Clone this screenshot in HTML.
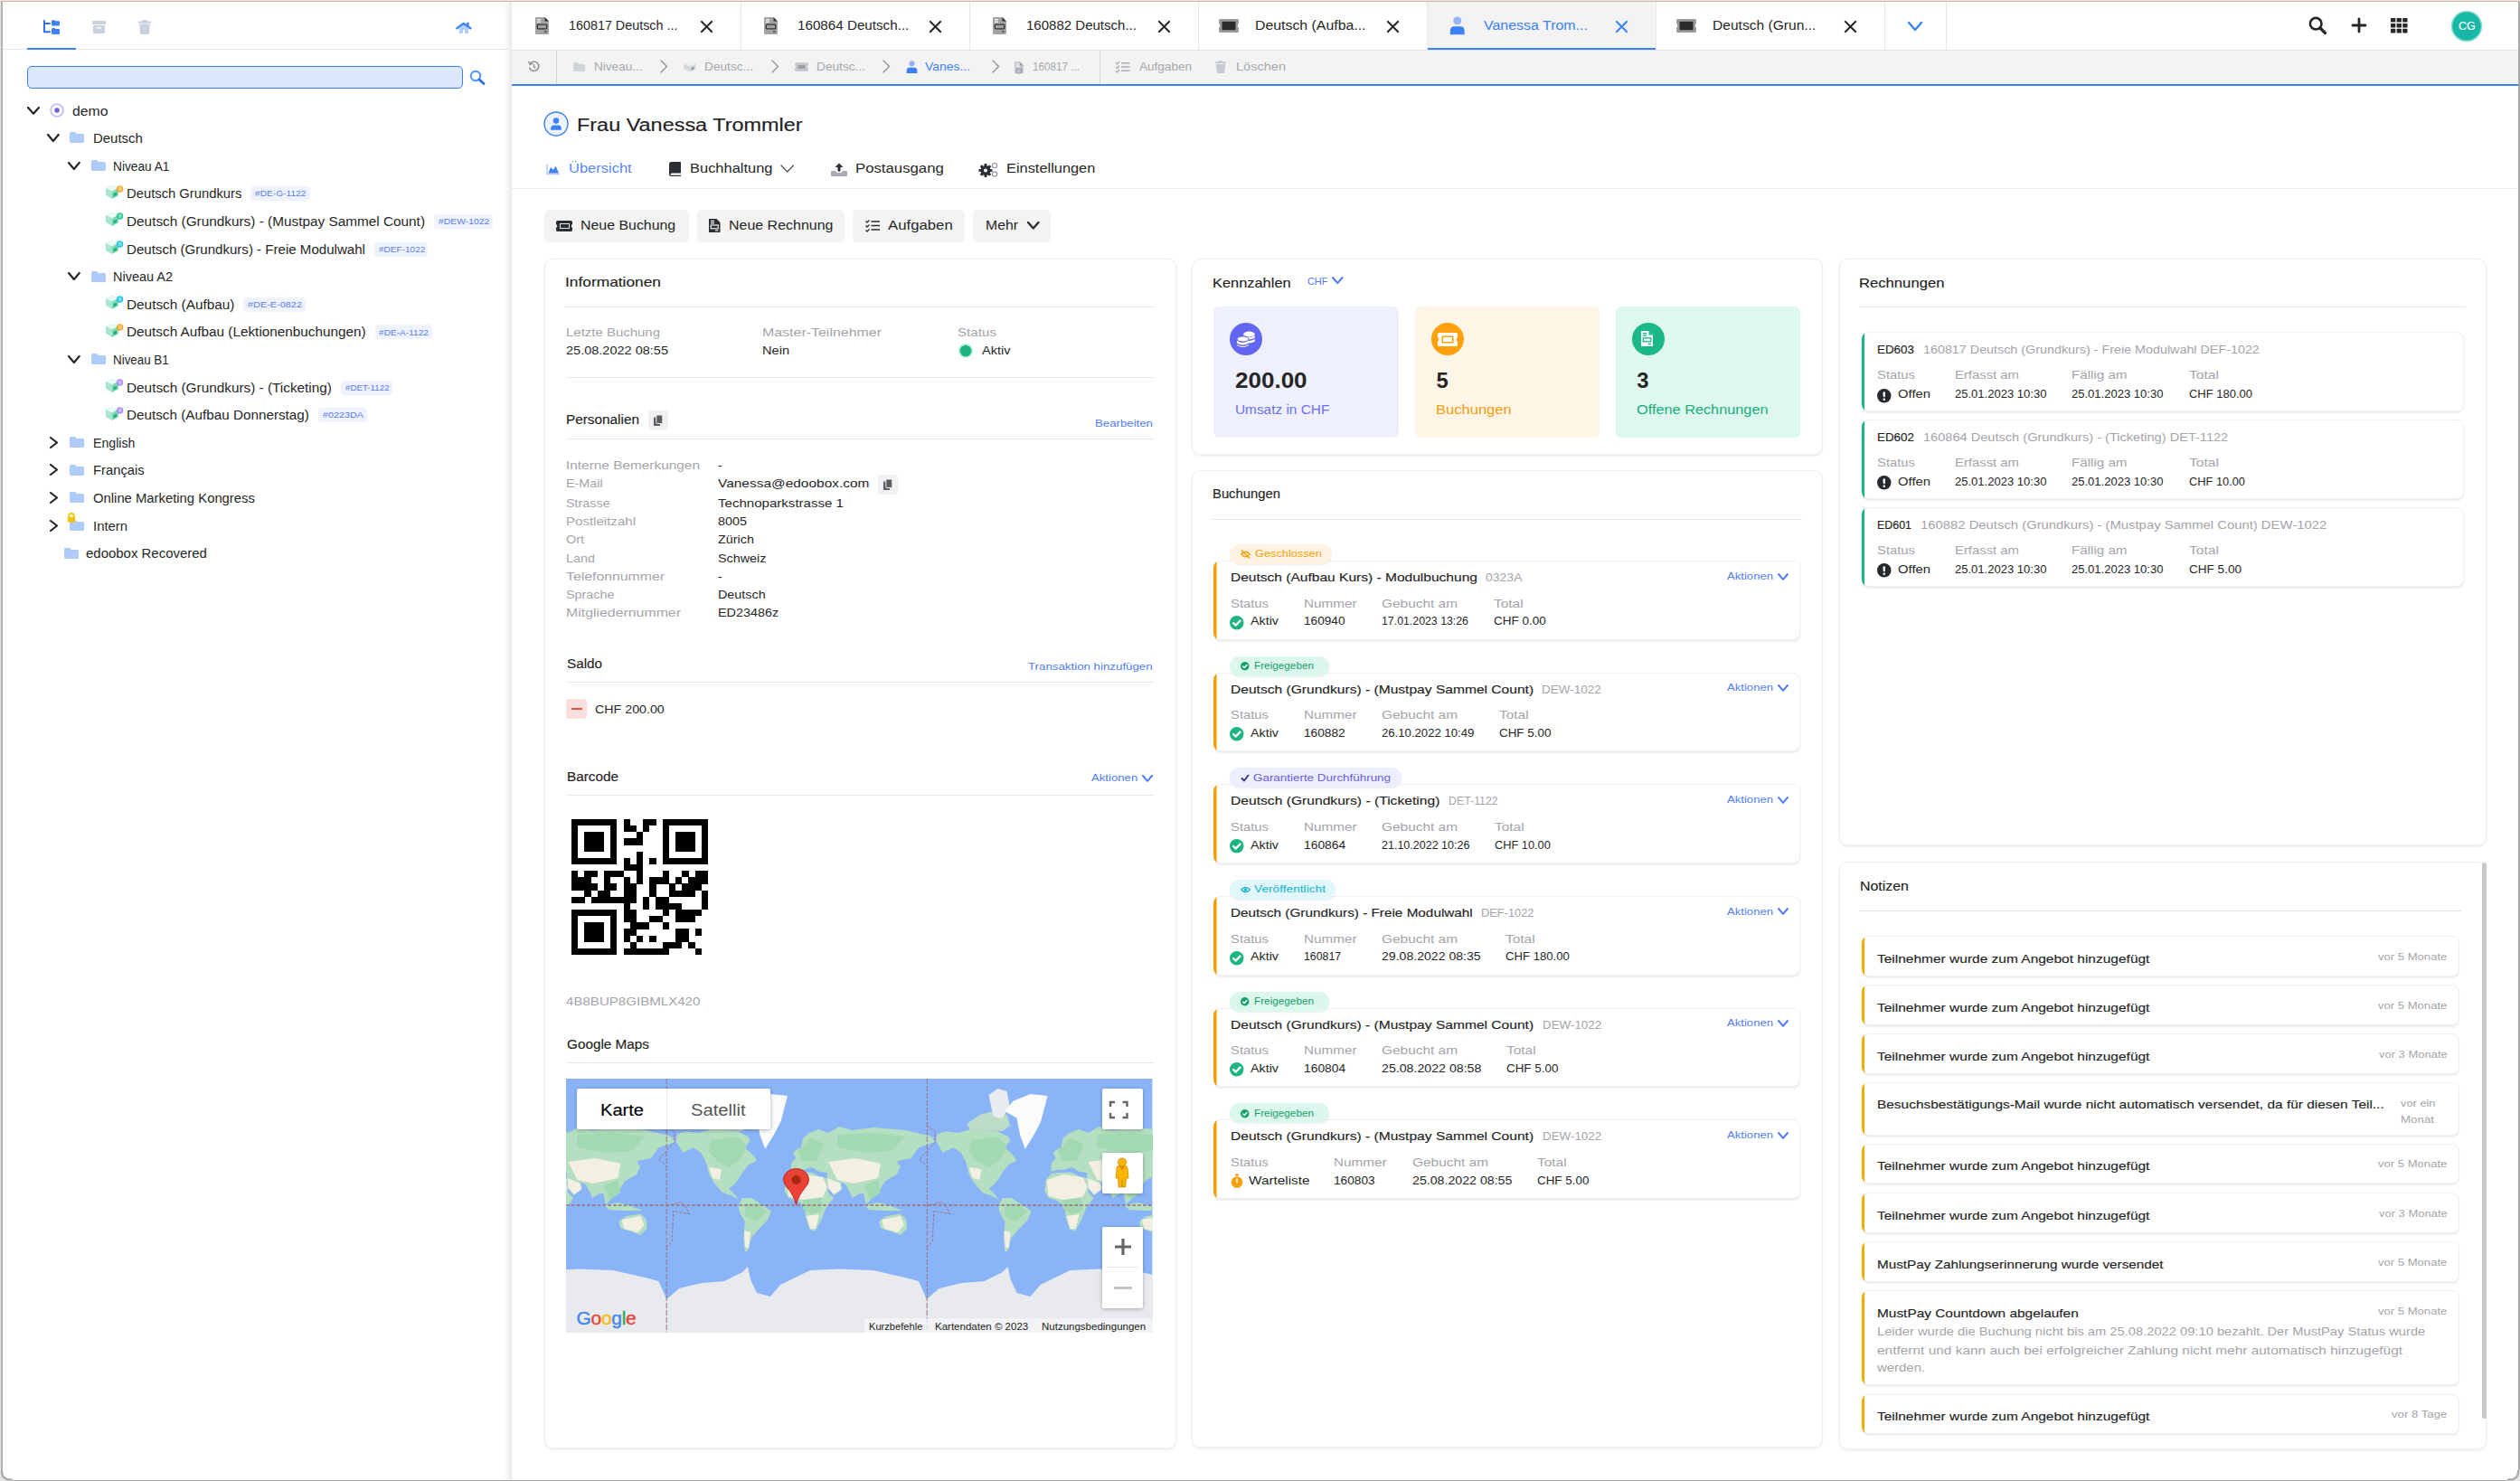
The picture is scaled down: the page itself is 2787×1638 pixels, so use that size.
<!DOCTYPE html>
<html><head><meta charset="utf-8"><style>
html,body{margin:0;padding:0;width:2787px;height:1638px;overflow:hidden;background:#fff}
body{position:relative;font-family:"Liberation Sans",sans-serif}
.t{position:absolute;white-space:pre;line-height:1;font-family:"Liberation Sans",sans-serif}
.b{position:absolute;box-sizing:border-box}
svg.b{overflow:visible}
</style></head><body>
<div class="b" style="left:0;top:0;width:2787px;height:1638px;background:#fff"></div>
<div class="b" style="left:3.00px;top:2.00px;width:563.00px;height:1636.00px;background:#fff"></div>
<div class="b" style="left:556.00px;top:2.00px;width:10.00px;height:1636.00px;background:linear-gradient(to right, rgba(0,0,0,0), rgba(0,0,0,0.035) 60%, rgba(0,0,0,0.09))"></div>
<div class="b" style="left:3.00px;top:54.00px;width:563.00px;height:1.00px;background:#e3e8ee"></div>
<div class="b" style="left:30.00px;top:53.00px;width:54.00px;height:2.00px;background:#3b82f6"></div>
<svg class="b" style="left:47.00px;top:22.00px;" width="20" height="17" viewBox="0 0 20 17"><path d="M2 1 V13.2 H8 M2 4 H8" fill="none" stroke="#2f6fec" stroke-width="2" stroke-linecap="round"/><path d="M10 1.2 Q10 0.2 11.2 0.2 H13.5 L14.5 1.2 H17.8 Q19 1.2 19 2.4 V5.6 Q19 6.6 17.8 6.6 H11.2 Q10 6.6 10 5.6Z" fill="#3d82f3"/><path d="M10 10.2 Q10 9 11.2 9 H13.5 L14.5 10 H17.8 Q19 10 19 11.2 V14.8 Q19 16 17.8 16 H11.2 Q10 16 10 14.8Z" fill="#3d82f3"/></svg>
<svg class="b" style="left:102.00px;top:23.00px;" width="15" height="14" viewBox="0 0 15 14"><rect x="0" y="0" width="15" height="4" rx="0.8" fill="#c9d2dd"/><path d="M1 5 H14 V13 Q14 14 13 14 H2 Q1 14 1 13Z" fill="#c9d2dd"/><rect x="5" y="7" width="5" height="1.6" rx="0.8" fill="#fff"/></svg>
<svg class="b" style="left:153.00px;top:22.00px;" width="14" height="16" viewBox="0 0 14 16"><rect x="0" y="1.5" width="14" height="2.3" rx="0.5" fill="#c9d2dd"/><rect x="4.5" y="0" width="5" height="2" rx="0.5" fill="#c9d2dd"/><path d="M1.2 4.6 H12.8 L12 15 Q11.9 16 10.9 16 H3.1 Q2.1 16 2 15Z" fill="#c9d2dd"/></svg>
<svg class="b" style="left:503.00px;top:23.00px;" width="19" height="15" viewBox="0 0 19 15"><path d="M5 8.6 L10 4.6 L15 8.6 V14 H11.1 V10.8 Q11.1 9.5 10 9.5 Q8.9 9.5 8.9 10.8 V14 H5Z" fill="#b1cdfa"/><path d="M2.4 8.2 L9.8 2.9 L17.3 8.2" fill="none" stroke="#3b82f6" stroke-width="2.4" stroke-linecap="round" stroke-linejoin="round"/><rect x="13.2" y="1.8" width="2.5" height="3.8" fill="#3b82f6"/></svg>
<div class="b" style="left:30.00px;top:73.00px;width:482.00px;height:25.00px;background:#dbe7fd;border:1.5px solid #3b82f6;border-radius:5px;box-sizing:border-box"></div>
<svg class="b" style="left:519.00px;top:77.00px;" width="18" height="17" viewBox="0 0 18 17"><circle cx="7" cy="7" r="5.2" fill="none" stroke="#5b9cf7" stroke-width="2.2"/><path d="M11 11 L16 15.5" stroke="#2f6fec" stroke-width="3" stroke-linecap="round"/></svg>
<svg class="b" style="left:29.00px;top:116.65px;" width="16" height="10.7" viewBox="0 0 16 10.7"><path d="M2 2 L8.0 8.7 L14 2" fill="none" stroke="#262626" stroke-width="2.2" stroke-linecap="round" stroke-linejoin="round"/></svg>
<svg class="b" style="left:55.00px;top:114.00px;" width="16" height="16" viewBox="0 0 16 16"><circle cx="8" cy="8" r="6.9" fill="none" stroke="#c8bdfb" stroke-width="1.8"/><circle cx="8" cy="8" r="2.7" fill="#6c5ce7"/></svg>
<div class="t" style="left:79.80px;top:115.55px;font-size:14px;color:#262626;letter-spacing:0.000px;transform:scaleX(1.1279);transform-origin:0 0;">demo</div>
<svg class="b" style="left:51.15px;top:146.50px;" width="15.7" height="11" viewBox="0 0 15.7 11"><path d="M2 2 L7.85 9 L13.7 2" fill="none" stroke="#262626" stroke-width="2.2" stroke-linecap="round" stroke-linejoin="round"/></svg>
<svg class="b" style="left:77.00px;top:146.00px;" width="16" height="12" viewBox="0 0 16 12"><path d="M1.5 0 H6.08 L8.0 2.04 H14.5 Q16 2.04 16 3.5999999999999996 V10.5 Q16 12 14.5 12 H1.5 Q0 12 0 10.5 V1.5 Q0 0 1.5 0 Z" fill="#aecbfa"/></svg>
<div class="t" style="left:102.50px;top:145.55px;font-size:14px;color:#262626;letter-spacing:0.000px;transform:scaleX(1.0670);transform-origin:0 0;">Deutsch</div>
<svg class="b" style="left:74.15px;top:177.50px;" width="15.7" height="11" viewBox="0 0 15.7 11"><path d="M2 2 L7.85 9 L13.7 2" fill="none" stroke="#262626" stroke-width="2.2" stroke-linecap="round" stroke-linejoin="round"/></svg>
<svg class="b" style="left:100.50px;top:177.00px;" width="16" height="12" viewBox="0 0 16 12"><path d="M1.5 0 H6.08 L8.0 2.04 H14.5 Q16 2.04 16 3.5999999999999996 V10.5 Q16 12 14.5 12 H1.5 Q0 12 0 10.5 V1.5 Q0 0 1.5 0 Z" fill="#aecbfa"/></svg>
<div class="t" style="left:125.00px;top:176.55px;font-size:14px;color:#262626;letter-spacing:0.000px;transform:scaleX(0.9793);transform-origin:0 0;">Niveau A1</div>
<svg class="b" style="left:116.00px;top:202.50px;" width="22" height="20" viewBox="0 0 22 20"><path d="M8 2 L15 5 L15 13 L8 17 L1 13 L1 5 Z" fill="#a7e6cf"/><path d="M8 2 L15 5 L8 8.5 L1 5 Z" fill="#e9faf3"/><path d="M8 8.5 L15 5 L15 13 L8 17 Z" fill="#7fd9b6"/><path d="M9.5 11 L13 9.5 L13 13 L9.5 14.5 Z" fill="#1fae7a"/><circle cx="16.5" cy="6" r="3.1" fill="#f4a62a" fill-opacity="0.6" stroke="#f4a62a" stroke-width="1.3"/></svg>
<div class="t" style="left:140.30px;top:207.05px;font-size:14px;color:#262626;letter-spacing:0.000px;transform:scaleX(1.0563);transform-origin:0 0;">Deutsch Grundkurs</div>
<div class="b" style="left:277.30px;top:206.10px;width:66.10px;height:16.00px;background:#eef3fe;border-radius:4px"></div>
<div class="t" style="left:282.00px;top:209.37px;font-size:9.6px;color:#5b7cf0;letter-spacing:0.000px;transform:scaleX(1.0605);transform-origin:0 0;">#DE-G-1122</div>
<svg class="b" style="left:116.00px;top:233.30px;" width="22" height="20" viewBox="0 0 22 20"><path d="M8 2 L15 5 L15 13 L8 17 L1 13 L1 5 Z" fill="#a7e6cf"/><path d="M8 2 L15 5 L8 8.5 L1 5 Z" fill="#e9faf3"/><path d="M8 8.5 L15 5 L15 13 L8 17 Z" fill="#7fd9b6"/><path d="M9.5 11 L13 9.5 L13 13 L9.5 14.5 Z" fill="#1fae7a"/><circle cx="16.5" cy="6" r="3.1" fill="#22c98e" fill-opacity="0.6" stroke="#22c98e" stroke-width="1.3"/></svg>
<div class="t" style="left:140.30px;top:237.85px;font-size:14px;color:#262626;letter-spacing:0.000px;transform:scaleX(1.0960);transform-origin:0 0;">Deutsch (Grundkurs) - (Mustpay Sammel Count)</div>
<div class="b" style="left:479.90px;top:236.90px;width:65.00px;height:16.00px;background:#eef3fe;border-radius:4px"></div>
<div class="t" style="left:484.60px;top:240.17px;font-size:9.6px;color:#5b7cf0;letter-spacing:0.000px;transform:scaleX(1.0822);transform-origin:0 0;">#DEW-1022</div>
<svg class="b" style="left:116.00px;top:264.00px;" width="22" height="20" viewBox="0 0 22 20"><path d="M8 2 L15 5 L15 13 L8 17 L1 13 L1 5 Z" fill="#a7e6cf"/><path d="M8 2 L15 5 L8 8.5 L1 5 Z" fill="#e9faf3"/><path d="M8 8.5 L15 5 L15 13 L8 17 Z" fill="#7fd9b6"/><path d="M9.5 11 L13 9.5 L13 13 L9.5 14.5 Z" fill="#1fae7a"/><circle cx="16.5" cy="6" r="3.1" fill="#22c3e6" fill-opacity="0.6" stroke="#22c3e6" stroke-width="1.3"/></svg>
<div class="t" style="left:140.30px;top:268.55px;font-size:14px;color:#262626;letter-spacing:0.000px;transform:scaleX(1.0767);transform-origin:0 0;">Deutsch (Grundkurs) - Freie Modulwahl</div>
<div class="b" style="left:413.80px;top:267.60px;width:59.70px;height:16.00px;background:#eef3fe;border-radius:4px"></div>
<div class="t" style="left:418.50px;top:270.87px;font-size:9.6px;color:#5b7cf0;letter-spacing:0.000px;transform:scaleX(1.0470);transform-origin:0 0;">#DEF-1022</div>
<svg class="b" style="left:74.15px;top:300.00px;" width="15.7" height="11" viewBox="0 0 15.7 11"><path d="M2 2 L7.85 9 L13.7 2" fill="none" stroke="#262626" stroke-width="2.2" stroke-linecap="round" stroke-linejoin="round"/></svg>
<svg class="b" style="left:100.50px;top:299.50px;" width="16" height="12" viewBox="0 0 16 12"><path d="M1.5 0 H6.08 L8.0 2.04 H14.5 Q16 2.04 16 3.5999999999999996 V10.5 Q16 12 14.5 12 H1.5 Q0 12 0 10.5 V1.5 Q0 0 1.5 0 Z" fill="#aecbfa"/></svg>
<div class="t" style="left:125.00px;top:299.05px;font-size:14px;color:#262626;letter-spacing:0.000px;transform:scaleX(1.0357);transform-origin:0 0;">Niveau A2</div>
<svg class="b" style="left:116.00px;top:325.20px;" width="22" height="20" viewBox="0 0 22 20"><path d="M8 2 L15 5 L15 13 L8 17 L1 13 L1 5 Z" fill="#a7e6cf"/><path d="M8 2 L15 5 L8 8.5 L1 5 Z" fill="#e9faf3"/><path d="M8 8.5 L15 5 L15 13 L8 17 Z" fill="#7fd9b6"/><path d="M9.5 11 L13 9.5 L13 13 L9.5 14.5 Z" fill="#1fae7a"/><circle cx="16.5" cy="6" r="3.1" fill="#22c3e6" fill-opacity="0.6" stroke="#22c3e6" stroke-width="1.3"/></svg>
<div class="t" style="left:140.30px;top:329.75px;font-size:14px;color:#262626;letter-spacing:0.000px;transform:scaleX(1.0959);transform-origin:0 0;">Deutsch (Aufbau)</div>
<div class="b" style="left:269.30px;top:328.80px;width:68.90px;height:16.00px;background:#eef3fe;border-radius:4px"></div>
<div class="t" style="left:274.00px;top:332.07px;font-size:9.6px;color:#5b7cf0;letter-spacing:0.000px;transform:scaleX(1.1357);transform-origin:0 0;">#DE-E-0822</div>
<svg class="b" style="left:116.00px;top:355.80px;" width="22" height="20" viewBox="0 0 22 20"><path d="M8 2 L15 5 L15 13 L8 17 L1 13 L1 5 Z" fill="#a7e6cf"/><path d="M8 2 L15 5 L8 8.5 L1 5 Z" fill="#e9faf3"/><path d="M8 8.5 L15 5 L15 13 L8 17 Z" fill="#7fd9b6"/><path d="M9.5 11 L13 9.5 L13 13 L9.5 14.5 Z" fill="#1fae7a"/><circle cx="16.5" cy="6" r="3.1" fill="#f4a62a" fill-opacity="0.6" stroke="#f4a62a" stroke-width="1.3"/></svg>
<div class="t" style="left:140.30px;top:360.35px;font-size:14px;color:#262626;letter-spacing:0.000px;transform:scaleX(1.0935);transform-origin:0 0;">Deutsch Aufbau (Lektionenbuchungen)</div>
<div class="b" style="left:414.60px;top:359.40px;width:63.90px;height:16.00px;background:#eef3fe;border-radius:4px"></div>
<div class="t" style="left:419.30px;top:362.67px;font-size:9.6px;color:#5b7cf0;letter-spacing:0.000px;transform:scaleX(1.0553);transform-origin:0 0;">#DE-A-1122</div>
<svg class="b" style="left:74.15px;top:391.80px;" width="15.7" height="11" viewBox="0 0 15.7 11"><path d="M2 2 L7.85 9 L13.7 2" fill="none" stroke="#262626" stroke-width="2.2" stroke-linecap="round" stroke-linejoin="round"/></svg>
<svg class="b" style="left:100.50px;top:391.30px;" width="16" height="12" viewBox="0 0 16 12"><path d="M1.5 0 H6.08 L8.0 2.04 H14.5 Q16 2.04 16 3.5999999999999996 V10.5 Q16 12 14.5 12 H1.5 Q0 12 0 10.5 V1.5 Q0 0 1.5 0 Z" fill="#aecbfa"/></svg>
<div class="t" style="left:125.00px;top:390.85px;font-size:14px;color:#262626;letter-spacing:0.000px;transform:scaleX(0.9552);transform-origin:0 0;">Niveau B1</div>
<svg class="b" style="left:116.00px;top:417.20px;" width="22" height="20" viewBox="0 0 22 20"><path d="M8 2 L15 5 L15 13 L8 17 L1 13 L1 5 Z" fill="#a7e6cf"/><path d="M8 2 L15 5 L8 8.5 L1 5 Z" fill="#e9faf3"/><path d="M8 8.5 L15 5 L15 13 L8 17 Z" fill="#7fd9b6"/><path d="M9.5 11 L13 9.5 L13 13 L9.5 14.5 Z" fill="#1fae7a"/><circle cx="16.5" cy="6" r="3.1" fill="#a78bfa" fill-opacity="0.6" stroke="#a78bfa" stroke-width="1.3"/></svg>
<div class="t" style="left:140.30px;top:421.75px;font-size:14px;color:#262626;letter-spacing:0.000px;transform:scaleX(1.0951);transform-origin:0 0;">Deutsch (Grundkurs) - (Ticketing)</div>
<div class="b" style="left:376.80px;top:420.80px;width:57.70px;height:16.00px;background:#eef3fe;border-radius:4px"></div>
<div class="t" style="left:381.50px;top:424.07px;font-size:9.6px;color:#5b7cf0;letter-spacing:0.000px;transform:scaleX(1.0156);transform-origin:0 0;">#DET-1122</div>
<svg class="b" style="left:116.00px;top:447.60px;" width="22" height="20" viewBox="0 0 22 20"><path d="M8 2 L15 5 L15 13 L8 17 L1 13 L1 5 Z" fill="#a7e6cf"/><path d="M8 2 L15 5 L8 8.5 L1 5 Z" fill="#e9faf3"/><path d="M8 8.5 L15 5 L15 13 L8 17 Z" fill="#7fd9b6"/><path d="M9.5 11 L13 9.5 L13 13 L9.5 14.5 Z" fill="#1fae7a"/><circle cx="16.5" cy="6" r="3.1" fill="#a78bfa" fill-opacity="0.6" stroke="#a78bfa" stroke-width="1.3"/></svg>
<div class="t" style="left:140.30px;top:452.15px;font-size:14px;color:#262626;letter-spacing:0.000px;transform:scaleX(1.0901);transform-origin:0 0;">Deutsch (Aufbau Donnerstag)</div>
<div class="b" style="left:351.80px;top:451.20px;width:54.50px;height:16.00px;background:#eef3fe;border-radius:4px"></div>
<div class="t" style="left:356.50px;top:454.47px;font-size:9.6px;color:#5b7cf0;letter-spacing:0.000px;transform:scaleX(1.1241);transform-origin:0 0;">#0223DA</div>
<svg class="b" style="left:53.50px;top:481.90px;" width="11" height="15" viewBox="0 0 11 15"><path d="M2 2 L9 7.5 L2 13" fill="none" stroke="#262626" stroke-width="2.2" stroke-linecap="round" stroke-linejoin="round"/></svg>
<svg class="b" style="left:77.00px;top:483.20px;" width="16" height="12" viewBox="0 0 16 12"><path d="M1.5 0 H6.08 L8.0 2.04 H14.5 Q16 2.04 16 3.5999999999999996 V10.5 Q16 12 14.5 12 H1.5 Q0 12 0 10.5 V1.5 Q0 0 1.5 0 Z" fill="#aecbfa"/></svg>
<div class="t" style="left:102.50px;top:482.75px;font-size:14px;color:#262626;letter-spacing:0.000px;transform:scaleX(1.0105);transform-origin:0 0;">English</div>
<svg class="b" style="left:53.50px;top:512.30px;" width="11" height="15" viewBox="0 0 11 15"><path d="M2 2 L9 7.5 L2 13" fill="none" stroke="#262626" stroke-width="2.2" stroke-linecap="round" stroke-linejoin="round"/></svg>
<svg class="b" style="left:77.00px;top:513.60px;" width="16" height="12" viewBox="0 0 16 12"><path d="M1.5 0 H6.08 L8.0 2.04 H14.5 Q16 2.04 16 3.5999999999999996 V10.5 Q16 12 14.5 12 H1.5 Q0 12 0 10.5 V1.5 Q0 0 1.5 0 Z" fill="#aecbfa"/></svg>
<div class="t" style="left:102.50px;top:513.15px;font-size:14px;color:#262626;letter-spacing:0.000px;transform:scaleX(1.0562);transform-origin:0 0;">Français</div>
<svg class="b" style="left:53.50px;top:543.00px;" width="11" height="15" viewBox="0 0 11 15"><path d="M2 2 L9 7.5 L2 13" fill="none" stroke="#262626" stroke-width="2.2" stroke-linecap="round" stroke-linejoin="round"/></svg>
<svg class="b" style="left:77.00px;top:544.30px;" width="16" height="12" viewBox="0 0 16 12"><path d="M1.5 0 H6.08 L8.0 2.04 H14.5 Q16 2.04 16 3.5999999999999996 V10.5 Q16 12 14.5 12 H1.5 Q0 12 0 10.5 V1.5 Q0 0 1.5 0 Z" fill="#aecbfa"/></svg>
<div class="t" style="left:102.50px;top:543.85px;font-size:14px;color:#262626;letter-spacing:0.000px;transform:scaleX(1.0594);transform-origin:0 0;">Online Marketing Kongress</div>
<svg class="b" style="left:53.50px;top:573.90px;" width="11" height="15" viewBox="0 0 11 15"><path d="M2 2 L9 7.5 L2 13" fill="none" stroke="#262626" stroke-width="2.2" stroke-linecap="round" stroke-linejoin="round"/></svg>
<svg class="b" style="left:77.00px;top:575.20px;" width="16" height="12" viewBox="0 0 16 12"><path d="M1.5 0 H6.08 L8.0 2.04 H14.5 Q16 2.04 16 3.5999999999999996 V10.5 Q16 12 14.5 12 H1.5 Q0 12 0 10.5 V1.5 Q0 0 1.5 0 Z" fill="#aecbfa"/></svg>
<svg class="b" style="left:74.00px;top:567.20px;" width="10" height="11" viewBox="0 0 10 11"><path d="M2.2 5 V3.6 Q2.2 0.8 5 0.8 Q7.8 0.8 7.8 3.6 V5" fill="none" stroke="#f5c400" stroke-width="1.8"/><rect x="0.8" y="4.8" width="8.4" height="5.8" rx="1" fill="#f5c400"/></svg>
<div class="t" style="left:102.50px;top:574.75px;font-size:14px;color:#262626;letter-spacing:0.000px;transform:scaleX(1.0642);transform-origin:0 0;">Intern</div>
<svg class="b" style="left:71.00px;top:605.50px;" width="16" height="12" viewBox="0 0 16 12"><path d="M1.5 0 H6.08 L8.0 2.04 H14.5 Q16 2.04 16 3.5999999999999996 V10.5 Q16 12 14.5 12 H1.5 Q0 12 0 10.5 V1.5 Q0 0 1.5 0 Z" fill="#aecbfa"/></svg>
<div class="t" style="left:95.30px;top:605.05px;font-size:14px;color:#262626;letter-spacing:0.000px;transform:scaleX(1.0685);transform-origin:0 0;">edoobox Recovered</div>
<div class="b" style="left:566.00px;top:2.00px;width:2219.00px;height:53.00px;background:#fff"></div>
<div class="b" style="left:566.00px;top:55.00px;width:2219.00px;height:1.00px;background:#dde3ea"></div>
<div class="b" style="left:819.00px;top:2.00px;width:1.00px;height:53.00px;background:#e5e7eb"></div>
<svg class="b" style="left:592.00px;top:19.00px;" width="15" height="19" viewBox="0 0 15 19"><path d="M1 0 H10.5 L15 4.5 V18 Q15 19 14 19 H1 Q0 19 0 18 V1 Q0 0 1 0Z" fill="#a3a3a3"/><path d="M10.5 0 L15 4.5 H10.5Z" fill="#333"/><rect x="2" y="2" width="4" height="1.6" fill="#e6e6e6"/><rect x="2" y="4.6" width="4" height="1.2" fill="#fff"/><rect x="2.3" y="8.2" width="10.4" height="4.6" rx="0.8" fill="none" stroke="#333" stroke-width="1.3"/><rect x="10" y="15.5" width="2.8" height="1.1" fill="#333"/></svg>
<div class="t" style="left:628.60px;top:19.56px;font-size:15.4px;color:#262626;letter-spacing:0.000px;transform:scaleX(0.9321);transform-origin:0 0;">160817 Deutsch ...</div>
<svg class="b" style="left:775.00px;top:22.50px;" width="13" height="13" viewBox="0 0 13 13"><path d="M1 1 L12 12 M12 1 L1 12" stroke="#262626" stroke-width="2" stroke-linecap="square"/></svg>
<div class="b" style="left:1072.00px;top:2.00px;width:1.00px;height:53.00px;background:#e5e7eb"></div>
<svg class="b" style="left:845.00px;top:19.00px;" width="15" height="19" viewBox="0 0 15 19"><path d="M1 0 H10.5 L15 4.5 V18 Q15 19 14 19 H1 Q0 19 0 18 V1 Q0 0 1 0Z" fill="#a3a3a3"/><path d="M10.5 0 L15 4.5 H10.5Z" fill="#333"/><rect x="2" y="2" width="4" height="1.6" fill="#e6e6e6"/><rect x="2" y="4.6" width="4" height="1.2" fill="#fff"/><rect x="2.3" y="8.2" width="10.4" height="4.6" rx="0.8" fill="none" stroke="#333" stroke-width="1.3"/><rect x="10" y="15.5" width="2.8" height="1.1" fill="#333"/></svg>
<div class="t" style="left:881.60px;top:19.56px;font-size:15.4px;color:#262626;letter-spacing:0.000px;transform:scaleX(0.9872);transform-origin:0 0;">160864 Deutsch...</div>
<svg class="b" style="left:1028.00px;top:22.50px;" width="13" height="13" viewBox="0 0 13 13"><path d="M1 1 L12 12 M12 1 L1 12" stroke="#262626" stroke-width="2" stroke-linecap="square"/></svg>
<div class="b" style="left:1325.00px;top:2.00px;width:1.00px;height:53.00px;background:#e5e7eb"></div>
<svg class="b" style="left:1098.00px;top:19.00px;" width="15" height="19" viewBox="0 0 15 19"><path d="M1 0 H10.5 L15 4.5 V18 Q15 19 14 19 H1 Q0 19 0 18 V1 Q0 0 1 0Z" fill="#a3a3a3"/><path d="M10.5 0 L15 4.5 H10.5Z" fill="#333"/><rect x="2" y="2" width="4" height="1.6" fill="#e6e6e6"/><rect x="2" y="4.6" width="4" height="1.2" fill="#fff"/><rect x="2.3" y="8.2" width="10.4" height="4.6" rx="0.8" fill="none" stroke="#333" stroke-width="1.3"/><rect x="10" y="15.5" width="2.8" height="1.1" fill="#333"/></svg>
<div class="t" style="left:1134.60px;top:19.56px;font-size:15.4px;color:#262626;letter-spacing:0.000px;transform:scaleX(0.9760);transform-origin:0 0;">160882 Deutsch...</div>
<svg class="b" style="left:1281.00px;top:22.50px;" width="13" height="13" viewBox="0 0 13 13"><path d="M1 1 L12 12 M12 1 L1 12" stroke="#262626" stroke-width="2" stroke-linecap="square"/></svg>
<div class="b" style="left:1578.00px;top:2.00px;width:1.00px;height:53.00px;background:#e5e7eb"></div>
<svg class="b" style="left:1348.00px;top:21.00px;" width="22" height="15" viewBox="0 0 22 15"><path d="M1.5 0 H20.5 Q22 0 22 1.5 V4.95 Q19.5 7.5 22 10.05 V13.5 Q22 15 20.5 15 H1.5 Q0 15 0 13.5 V10.05 Q2.5 7.5 0 4.95 V1.5 Q0 0 1.5 0Z" fill="#9a9a9a"/><rect x="3.5" y="2.8" width="15" height="9.4" fill="#2b2b2b"/></svg>
<div class="t" style="left:1387.60px;top:19.56px;font-size:15.4px;color:#262626;letter-spacing:0.000px;transform:scaleX(1.0304);transform-origin:0 0;">Deutsch (Aufba...</div>
<svg class="b" style="left:1534.00px;top:22.50px;" width="13" height="13" viewBox="0 0 13 13"><path d="M1 1 L12 12 M12 1 L1 12" stroke="#262626" stroke-width="2" stroke-linecap="square"/></svg>
<div class="b" style="left:1579.00px;top:2.00px;width:252.00px;height:53.00px;background:#f3f3f3"></div>
<div class="b" style="left:1579.00px;top:53.00px;width:252.00px;height:2.00px;background:#3b82f6"></div>
<div class="b" style="left:1831.00px;top:2.00px;width:1.00px;height:53.00px;background:#e5e7eb"></div>
<svg class="b" style="left:1602.80px;top:17.70px;" width="17.5" height="20.3" viewBox="0 0 17.5 20.3"><circle cx="8.75" cy="4.872" r="4.466" fill="#93b4f7"/><path d="M0.875 20.3 V16.240000000000002 Q0.875 11.368000000000002 5.25 11.368000000000002 H12.25 Q16.625 11.368000000000002 16.625 16.240000000000002 V20.3 Z" fill="#3b82f6"/></svg>
<div class="t" style="left:1640.60px;top:19.56px;font-size:15.4px;color:#3b82f6;letter-spacing:0.000px;transform:scaleX(1.0362);transform-origin:0 0;">Vanessa Trom...</div>
<svg class="b" style="left:1787.00px;top:22.50px;" width="13" height="13" viewBox="0 0 13 13"><path d="M1 1 L12 12 M12 1 L1 12" stroke="#3b82f6" stroke-width="2" stroke-linecap="square"/></svg>
<div class="b" style="left:2084.00px;top:2.00px;width:1.00px;height:53.00px;background:#e5e7eb"></div>
<svg class="b" style="left:1854.00px;top:21.00px;" width="22" height="15" viewBox="0 0 22 15"><path d="M1.5 0 H20.5 Q22 0 22 1.5 V4.95 Q19.5 7.5 22 10.05 V13.5 Q22 15 20.5 15 H1.5 Q0 15 0 13.5 V10.05 Q2.5 7.5 0 4.95 V1.5 Q0 0 1.5 0Z" fill="#9a9a9a"/><rect x="3.5" y="2.8" width="15" height="9.4" fill="#2b2b2b"/></svg>
<div class="t" style="left:1893.60px;top:19.56px;font-size:15.4px;color:#262626;letter-spacing:0.000px;transform:scaleX(1.0126);transform-origin:0 0;">Deutsch (Grun...</div>
<svg class="b" style="left:2040.00px;top:22.50px;" width="13" height="13" viewBox="0 0 13 13"><path d="M1 1 L12 12 M12 1 L1 12" stroke="#262626" stroke-width="2" stroke-linecap="square"/></svg>
<div class="b" style="left:2152.00px;top:2.00px;width:1.00px;height:53.00px;background:#e5e7eb"></div>
<svg class="b" style="left:2109.00px;top:22.50px;" width="18" height="12" viewBox="0 0 18 12"><path d="M2 2 L9.0 10 L16 2" fill="none" stroke="#3b82f6" stroke-width="2.4" stroke-linecap="round" stroke-linejoin="round"/></svg>
<svg class="b" style="left:2553.00px;top:18.00px;" width="21" height="20" viewBox="0 0 21 20"><circle cx="8.2" cy="8.2" r="6.3" fill="none" stroke="#262626" stroke-width="2.6"/><path d="M13 13 L18.5 18.5" stroke="#262626" stroke-width="3.2" stroke-linecap="round"/></svg>
<svg class="b" style="left:2601.00px;top:20.00px;" width="16" height="16" viewBox="0 0 16 16"><path d="M8 1 V15 M1 8 H15" stroke="#262626" stroke-width="2.8" stroke-linecap="round"/></svg>
<svg class="b" style="left:2644.00px;top:20.00px;" width="19" height="17" viewBox="0 0 19 17"><rect x="0.0" y="0.0" width="5.3" height="4.6" rx="0.6" fill="#262626"/><rect x="6.6" y="0.0" width="5.3" height="4.6" rx="0.6" fill="#262626"/><rect x="13.2" y="0.0" width="5.3" height="4.6" rx="0.6" fill="#262626"/><rect x="0.0" y="5.9" width="5.3" height="4.6" rx="0.6" fill="#262626"/><rect x="6.6" y="5.9" width="5.3" height="4.6" rx="0.6" fill="#262626"/><rect x="13.2" y="5.9" width="5.3" height="4.6" rx="0.6" fill="#262626"/><rect x="0.0" y="11.8" width="5.3" height="4.6" rx="0.6" fill="#262626"/><rect x="6.6" y="11.8" width="5.3" height="4.6" rx="0.6" fill="#262626"/><rect x="13.2" y="11.8" width="5.3" height="4.6" rx="0.6" fill="#262626"/></svg>
<svg class="b" style="left:2710.00px;top:11.00px;" width="36" height="36" viewBox="0 0 36 36"><circle cx="18" cy="18" r="16.5" fill="#17b8a6" stroke="#8fded2" stroke-width="1.6"/></svg>
<div class="t" style="left:2718.70px;top:22.77px;font-size:12.2px;color:#ffffff;letter-spacing:0.000px;transform:scaleX(1.0219);transform-origin:0 0;-webkit-text-stroke:0.15px #ffffff;">CG</div>
<div class="b" style="left:566.00px;top:56.00px;width:2219.00px;height:37.00px;background:#f3f3f3"></div>
<div class="b" style="left:566.00px;top:93.00px;width:2219.00px;height:2.00px;background:#3b82f6"></div>
<div class="b" style="left:615.00px;top:56.00px;width:1.00px;height:37.00px;background:#d4d4d4"></div>
<div class="b" style="left:1216.00px;top:56.00px;width:1.00px;height:37.00px;background:#d9d9d9"></div>
<svg class="b" style="left:584.00px;top:67.00px;" width="13" height="13" viewBox="0 0 13 13"><path d="M2.2 3.5 A5.2 5.2 0 1 1 1.5 7.5" fill="none" stroke="#8a8a8a" stroke-width="1.4"/><path d="M0.5 1 L2.2 4.5 L5.5 3" fill="none" stroke="#8a8a8a" stroke-width="1.3"/><path d="M6.5 4 V7 L8.5 8.5" fill="none" stroke="#8a8a8a" stroke-width="1.3"/></svg>
<svg class="b" style="left:634.00px;top:68.50px;" width="13" height="10" viewBox="0 0 13 10"><path d="M1.5 0 H4.94 L6.5 1.7000000000000002 H11.5 Q13 1.7000000000000002 13 3.0 V8.5 Q13 10 11.5 10 H1.5 Q0 10 0 8.5 V1.5 Q0 0 1.5 0 Z" fill="#cfd4da"/></svg>
<div class="t" style="left:656.70px;top:67.20px;font-size:13px;color:#a3a8ae;letter-spacing:0.000px;transform:scaleX(1.0448);transform-origin:0 0;">Niveau...</div>
<svg class="b" style="left:729.25px;top:65.20px;" width="10.5" height="17" viewBox="0 0 10.5 17"><path d="M2 2 L8.5 8.5 L2 15" fill="none" stroke="#8c8c8c" stroke-width="1.2" stroke-linecap="round" stroke-linejoin="round"/></svg>
<svg class="b" style="left:756.00px;top:67.00px;" width="14" height="13" viewBox="0 0 14 13"><path d="M7 0.5 L13.5 3.5 V9.5 L7 12.5 L0.5 9.5 V3.5Z" fill="#d5d9de"/><path d="M7 0.5 L13.5 3.5 L7 6.5 L0.5 3.5Z" fill="#eef0f2"/><path d="M8.5 8 L11.5 6.8 V9.5 L8.5 10.8Z" fill="#8e949b"/></svg>
<div class="t" style="left:779.00px;top:67.20px;font-size:13px;color:#a3a8ae;letter-spacing:0.000px;transform:scaleX(1.0527);transform-origin:0 0;">Deutsc...</div>
<svg class="b" style="left:851.75px;top:65.20px;" width="10.5" height="17" viewBox="0 0 10.5 17"><path d="M2 2 L8.5 8.5 L2 15" fill="none" stroke="#8c8c8c" stroke-width="1.2" stroke-linecap="round" stroke-linejoin="round"/></svg>
<svg class="b" style="left:879.00px;top:68.50px;" width="15" height="10" viewBox="0 0 15 10"><path d="M1.5 0 H13.5 Q15 0 15 1.5 V3.3000000000000003 Q12.5 5.0 15 6.7 V8.5 Q15 10 13.5 10 H1.5 Q0 10 0 8.5 V6.7 Q2.5 5.0 0 3.3000000000000003 V1.5 Q0 0 1.5 0Z" fill="#c8ccd1"/><rect x="3.5" y="2.8" width="8" height="4.4" fill="#9aa0a6"/></svg>
<div class="t" style="left:902.70px;top:67.20px;font-size:13px;color:#a3a8ae;letter-spacing:0.000px;transform:scaleX(1.0527);transform-origin:0 0;">Deutsc...</div>
<svg class="b" style="left:975.25px;top:65.20px;" width="10.5" height="17" viewBox="0 0 10.5 17"><path d="M2 2 L8.5 8.5 L2 15" fill="none" stroke="#8c8c8c" stroke-width="1.2" stroke-linecap="round" stroke-linejoin="round"/></svg>
<svg class="b" style="left:1002.00px;top:67.00px;" width="13" height="14" viewBox="0 0 13 14"><circle cx="6.5" cy="3.36" r="3.08" fill="#93b4f7"/><path d="M0.65 14 V11.200000000000001 Q0.65 7.840000000000001 3.9 7.840000000000001 H9.1 Q12.35 7.840000000000001 12.35 11.200000000000001 V14 Z" fill="#3b82f6"/></svg>
<div class="t" style="left:1023.40px;top:67.20px;font-size:13px;color:#3b82f6;letter-spacing:0.000px;transform:scaleX(1.0699);transform-origin:0 0;">Vanes...</div>
<svg class="b" style="left:1095.75px;top:65.20px;" width="10.5" height="17" viewBox="0 0 10.5 17"><path d="M2 2 L8.5 8.5 L2 15" fill="none" stroke="#8c8c8c" stroke-width="1.2" stroke-linecap="round" stroke-linejoin="round"/></svg>
<svg class="b" style="left:1122.00px;top:67.50px;" width="10" height="13" viewBox="0 0 10 13"><path d="M1 0 H5.5 L10 4.5 V12 Q10 13 9 13 H1 Q0 13 0 12 V1 Q0 0 1 0Z" fill="#c8ccd1"/><path d="M5.5 0 L10 4.5 H5.5Z" fill="#9aa0a6"/><rect x="2" y="2" width="4" height="1.6" fill="#e6e6e6"/><rect x="2" y="4.6" width="4" height="1.2" fill="#fff"/><rect x="2.3" y="8.2" width="5.4" height="4.6" rx="0.8" fill="none" stroke="#9aa0a6" stroke-width="1.3"/><rect x="5" y="9.5" width="2.8" height="1.1" fill="#9aa0a6"/></svg>
<div class="t" style="left:1142.00px;top:67.20px;font-size:13px;color:#a3a8ae;letter-spacing:0.000px;transform:scaleX(0.8992);transform-origin:0 0;">160817 ...</div>
<svg class="b" style="left:1233.00px;top:67.00px;" width="17" height="13" viewBox="0 0 17 13"><path d="M1 2.5 L2.5 4 L5 1 M1 7 L2.5 8.5 L5 5.5 M1 11.5 L2.5 13 L5 10" fill="none" stroke="#a9aeb4" stroke-width="1.3"/><path d="M7 2.7 H16.5 M7 7 H16.5 M7 11.3 H16.5" stroke="#a9aeb4" stroke-width="1.5"/></svg>
<div class="t" style="left:1260.40px;top:67.20px;font-size:13px;color:#a3a8ae;letter-spacing:0.000px;transform:scaleX(1.0420);transform-origin:0 0;">Aufgaben</div>
<svg class="b" style="left:1344.00px;top:67.00px;" width="12" height="14" viewBox="0 0 12 14"><rect x="0" y="1.3" width="12" height="2" rx="0.4" fill="#c4c9cf"/><rect x="4" y="0" width="4" height="1.6" fill="#c4c9cf"/><path d="M1 4 H11 L10.3 13 Q10.2 14 9.3 14 H2.7 Q1.8 14 1.7 13Z" fill="#c4c9cf"/></svg>
<div class="t" style="left:1367.20px;top:67.20px;font-size:13px;color:#a3a8ae;letter-spacing:0.000px;transform:scaleX(1.1190);transform-origin:0 0;">Löschen</div>
<svg class="b" style="left:601.00px;top:123.00px;" width="28" height="28" viewBox="0 0 28 28"><circle cx="14" cy="14" r="13" fill="#eef4fe" stroke="#3b82f6" stroke-width="1.4"/><circle cx="14" cy="10.6" r="3.3" fill="#3b82f6"/><path d="M8 20.8 Q8 15.6 11.5 15.6 H16.5 Q20 15.6 20 20.8 Z" fill="#3b82f6"/></svg>
<div class="t" style="left:638.30px;top:128.71px;font-size:19.6px;color:#222;letter-spacing:0.000px;transform:scaleX(1.1960);transform-origin:0 0;-webkit-text-stroke:0.15px #222;">Frau Vanessa Trommler</div>
<svg class="b" style="left:604.00px;top:181.00px;" width="15" height="13" viewBox="0 0 15 13"><path d="M1 0 V11.5 H15" fill="none" stroke="#b9cdf8" stroke-width="1.6"/><path d="M2.5 10.5 L5 4 L8 7 L10.5 2.5 L14 10.5Z" fill="#3f7ff3"/></svg>
<div class="t" style="left:628.90px;top:179.36px;font-size:14.7px;color:#5a86f4;letter-spacing:0.000px;transform:scaleX(1.1226);transform-origin:0 0;">Übersicht</div>
<svg class="b" style="left:740.00px;top:179.00px;" width="13" height="16" viewBox="0 0 13 16"><path d="M2.5 0 H13 V12.5 H3 Q1.5 12.5 1.5 14 Q1.5 14.8 3 14.8 H13 V16 H2.5 Q0 16 0 13.5 V2.5 Q0 0 2.5 0Z" fill="#2b2f33"/></svg>
<div class="t" style="left:762.90px;top:179.36px;font-size:14.7px;color:#262626;letter-spacing:0.000px;transform:scaleX(1.1207);transform-origin:0 0;">Buchhaltung</div>
<svg class="b" style="left:862.25px;top:180.90px;" width="17.5" height="11" viewBox="0 0 17.5 11"><path d="M2 2 L8.75 9 L15.5 2" fill="none" stroke="#555" stroke-width="1.3" stroke-linecap="round" stroke-linejoin="round"/></svg>
<svg class="b" style="left:919.00px;top:180.00px;" width="18" height="15" viewBox="0 0 18 15"><path d="M0 9 H5 L6.5 11 H11.5 L13 9 H18 V15 H0Z" fill="#a8adb3"/><path d="M9 0.5 L13.5 5 H10.5 V9.5 H7.5 V5 H4.5Z" fill="#2b2f33"/></svg>
<div class="t" style="left:945.60px;top:179.36px;font-size:14.7px;color:#262626;letter-spacing:0.000px;transform:scaleX(1.1408);transform-origin:0 0;">Postausgang</div>
<svg class="b" style="left:1083.00px;top:179.00px;" width="21" height="17" viewBox="0 0 21 17"><circle cx="7" cy="9.5" r="5.5" fill="#2b2f33"/><circle cx="7" cy="9.5" r="2" fill="#fff"/><rect x="5.6" y="2" width="2.8" height="3" fill="#2b2f33" transform="rotate(0 7 9.5)"/><rect x="5.6" y="2" width="2.8" height="3" fill="#2b2f33" transform="rotate(45 7 9.5)"/><rect x="5.6" y="2" width="2.8" height="3" fill="#2b2f33" transform="rotate(90 7 9.5)"/><rect x="5.6" y="2" width="2.8" height="3" fill="#2b2f33" transform="rotate(135 7 9.5)"/><rect x="5.6" y="2" width="2.8" height="3" fill="#2b2f33" transform="rotate(180 7 9.5)"/><rect x="5.6" y="2" width="2.8" height="3" fill="#2b2f33" transform="rotate(225 7 9.5)"/><rect x="5.6" y="2" width="2.8" height="3" fill="#2b2f33" transform="rotate(270 7 9.5)"/><rect x="5.6" y="2" width="2.8" height="3" fill="#2b2f33" transform="rotate(315 7 9.5)"/><circle cx="17" cy="4" r="2.6" fill="none" stroke="#9aa0a6" stroke-width="1.4"/><circle cx="17" cy="13.5" r="2.6" fill="none" stroke="#9aa0a6" stroke-width="1.4"/></svg>
<div class="t" style="left:1113.00px;top:179.36px;font-size:14.7px;color:#262626;letter-spacing:0.000px;transform:scaleX(1.1148);transform-origin:0 0;">Einstellungen</div>
<div class="b" style="left:566.00px;top:207.50px;width:2219.00px;height:1.50px;background:#ebebeb"></div>
<div class="b" style="left:602.00px;top:232.00px;width:160.00px;height:36.00px;background:#f3f3f3;border-radius:5px"></div>
<div class="b" style="left:771.00px;top:232.00px;width:163.00px;height:36.00px;background:#f3f3f3;border-radius:5px"></div>
<div class="b" style="left:943.00px;top:232.00px;width:124.00px;height:36.00px;background:#f3f3f3;border-radius:5px"></div>
<div class="b" style="left:1076.00px;top:232.00px;width:86.00px;height:36.00px;background:#f3f3f3;border-radius:5px"></div>
<svg class="b" style="left:615.00px;top:243.80px;" width="18" height="12" viewBox="0 0 18 12"><path d="M1.5 0 H16.5 Q18 0 18 1.5 V3.96 Q15.5 6.0 18 8.040000000000001 V10.5 Q18 12 16.5 12 H1.5 Q0 12 0 10.5 V8.040000000000001 Q2.5 6.0 0 3.96 V1.5 Q0 0 1.5 0Z" fill="#2b2f33"/><rect x="3.5" y="2.8" width="11" height="6.4" fill="#2b2f33"/></svg>
<div class="b" style="left:618.50px;top:246.50px;width:11.00px;height:6.50px;background:#2b2f33;border:1.3px solid #e8e8e8"></div>
<div class="t" style="left:642.40px;top:242.46px;font-size:14.7px;color:#262626;letter-spacing:0.000px;transform:scaleX(1.0827);transform-origin:0 0;">Neue Buchung</div>
<svg class="b" style="left:784.00px;top:242.00px;" width="12.5" height="15" viewBox="0 0 12.5 15"><path d="M0 0 H8.5 L12.5 4 V15 H0Z" fill="#2b2f33"/><rect x="2" y="1.8" width="4" height="1.3" fill="#f3f3f3"/><rect x="2" y="4" width="4" height="1.3" fill="#f3f3f3"/><rect x="2.2" y="7" width="8" height="3.8" fill="none" stroke="#f3f3f3" stroke-width="1.2"/><rect x="7" y="12.3" width="3.3" height="1.2" fill="#f3f3f3"/></svg>
<div class="t" style="left:805.50px;top:242.46px;font-size:14.7px;color:#262626;letter-spacing:0.000px;transform:scaleX(1.0871);transform-origin:0 0;">Neue Rechnung</div>
<svg class="b" style="left:956.50px;top:243.00px;" width="16" height="13" viewBox="0 0 16 13"><path d="M0.5 1.5 L2 3 L4.5 0.5 M0.5 6.5 L2 8 L4.5 5.5 M0.5 11.5 L2 13 L4.5 10.5" fill="none" stroke="#2b2f33" stroke-width="1.3"/><path d="M6.5 2 H16 M6.5 6.5 H16 M6.5 11 H16" stroke="#2b2f33" stroke-width="1.6"/></svg>
<div class="t" style="left:981.50px;top:242.46px;font-size:14.7px;color:#262626;letter-spacing:0.000px;transform:scaleX(1.1407);transform-origin:0 0;">Aufgaben</div>
<div class="t" style="left:1089.50px;top:242.46px;font-size:14.7px;color:#262626;letter-spacing:0.000px;transform:scaleX(1.0749);transform-origin:0 0;">Mehr</div>
<svg class="b" style="left:1134.75px;top:244.25px;" width="15.5" height="10.5" viewBox="0 0 15.5 10.5"><path d="M2 2 L7.75 8.5 L13.5 2" fill="none" stroke="#2b2f33" stroke-width="2.4" stroke-linecap="round" stroke-linejoin="round"/></svg>
<div class="b" style="left:601.50px;top:286.00px;width:699.00px;height:1316.00px;background:#fff;border:1px solid #eeeeee;border-radius:9px;box-shadow:0 1.5px 2.5px rgba(0,0,0,0.06)"></div>
<div class="t" style="left:624.50px;top:305.33px;font-size:14.5px;color:#1f1f1f;letter-spacing:0.000px;transform:scaleX(1.1955);transform-origin:0 0;-webkit-text-stroke:0.15px #1f1f1f;">Informationen</div>
<div class="b" style="left:624.00px;top:339.00px;width:653.00px;height:1.00px;background:#e4e4e4"></div>
<div class="t" style="left:626.30px;top:361.14px;font-size:13.3px;color:#a4a4aa;letter-spacing:0.000px;transform:scaleX(1.1251);transform-origin:0 0;">Letzte Buchung</div>
<div class="t" style="left:626.30px;top:381.04px;font-size:13.3px;color:#262626;letter-spacing:0.000px;transform:scaleX(1.0913);transform-origin:0 0;">25.08.2022 08:55</div>
<div class="t" style="left:843.00px;top:361.14px;font-size:13.3px;color:#a4a4aa;letter-spacing:0.000px;transform:scaleX(1.1986);transform-origin:0 0;">Master-Teilnehmer</div>
<div class="t" style="left:843.00px;top:381.04px;font-size:13.3px;color:#262626;letter-spacing:0.000px;transform:scaleX(1.0967);transform-origin:0 0;">Nein</div>
<div class="t" style="left:1059.00px;top:361.14px;font-size:13.3px;color:#a4a4aa;letter-spacing:0.000px;transform:scaleX(1.1404);transform-origin:0 0;">Status</div>
<svg class="b" style="left:1058.50px;top:379.00px;" width="18" height="18" viewBox="0 0 18 18"><circle cx="9" cy="9" r="8.2" fill="#bff0dc"/><circle cx="9" cy="9" r="6.3" fill="#1cb482"/></svg>
<div class="t" style="left:1086.00px;top:381.04px;font-size:13.3px;color:#262626;letter-spacing:0.000px;transform:scaleX(1.0929);transform-origin:0 0;">Aktiv</div>
<div class="b" style="left:626.00px;top:417.00px;width:650.00px;height:1.00px;background:#e8e8e8"></div>
<div class="t" style="left:626.30px;top:457.92px;font-size:13.8px;color:#1f1f1f;letter-spacing:0.000px;transform:scaleX(1.1113);transform-origin:0 0;-webkit-text-stroke:0.15px #1f1f1f;">Personalien</div>
<div class="b" style="left:717.00px;top:454.00px;width:22.00px;height:22.00px;background:#f1f1f1;border-radius:4px"></div>
<svg class="b" style="left:723.00px;top:459.00px;" width="10" height="12" viewBox="0 0 10 12"><rect x="0" y="2.5" width="7" height="9.5" rx="0.8" fill="#5a5e63"/><rect x="2.8" y="0" width="7" height="9.5" rx="0.8" fill="#5a5e63" stroke="#f1f1f1" stroke-width="1"/></svg>
<div class="t" style="left:1211.00px;top:462.28px;font-size:11.6px;color:#4f7df7;letter-spacing:0.000px;transform:scaleX(1.1406);transform-origin:0 0;">Bearbeiten</div>
<div class="b" style="left:626.00px;top:485.00px;width:650.00px;height:1.00px;background:#e8e8e8"></div>
<div class="t" style="left:626.30px;top:507.54px;font-size:13.3px;color:#a4a4aa;letter-spacing:0.000px;transform:scaleX(1.1570);transform-origin:0 0;">Interne Bemerkungen</div>
<div class="t" style="left:793.60px;top:507.54px;font-size:13.3px;color:#262626;letter-spacing:0.000px;transform:scaleX(1.0800);transform-origin:0 0;">-</div>
<div class="t" style="left:626.30px;top:527.94px;font-size:13.3px;color:#a4a4aa;letter-spacing:0.000px;transform:scaleX(1.0800);transform-origin:0 0;">E-Mail</div>
<div class="t" style="left:793.60px;top:527.94px;font-size:13.3px;color:#262626;letter-spacing:0.000px;transform:scaleX(1.1622);transform-origin:0 0;">Vanessa@edoobox.com</div>
<div class="t" style="left:626.30px;top:550.14px;font-size:13.3px;color:#a4a4aa;letter-spacing:0.000px;transform:scaleX(1.0800);transform-origin:0 0;">Strasse</div>
<div class="t" style="left:793.60px;top:550.14px;font-size:13.3px;color:#262626;letter-spacing:0.000px;transform:scaleX(1.1326);transform-origin:0 0;">Technoparkstrasse 1</div>
<div class="t" style="left:626.30px;top:570.34px;font-size:13.3px;color:#a4a4aa;letter-spacing:0.000px;transform:scaleX(1.1321);transform-origin:0 0;">Postleitzahl</div>
<div class="t" style="left:793.60px;top:570.34px;font-size:13.3px;color:#262626;letter-spacing:0.000px;transform:scaleX(1.0800);transform-origin:0 0;">8005</div>
<div class="t" style="left:626.30px;top:590.44px;font-size:13.3px;color:#a4a4aa;letter-spacing:0.000px;transform:scaleX(1.0800);transform-origin:0 0;">Ort</div>
<div class="t" style="left:793.60px;top:590.44px;font-size:13.3px;color:#262626;letter-spacing:0.000px;transform:scaleX(1.0800);transform-origin:0 0;">Zürich</div>
<div class="t" style="left:626.30px;top:611.04px;font-size:13.3px;color:#a4a4aa;letter-spacing:0.000px;transform:scaleX(1.0800);transform-origin:0 0;">Land</div>
<div class="t" style="left:793.60px;top:611.04px;font-size:13.3px;color:#262626;letter-spacing:0.000px;transform:scaleX(1.0800);transform-origin:0 0;">Schweiz</div>
<div class="t" style="left:626.30px;top:631.34px;font-size:13.3px;color:#a4a4aa;letter-spacing:0.000px;transform:scaleX(1.1891);transform-origin:0 0;">Telefonnummer</div>
<div class="t" style="left:793.60px;top:631.34px;font-size:13.3px;color:#262626;letter-spacing:0.000px;transform:scaleX(1.0800);transform-origin:0 0;">-</div>
<div class="t" style="left:626.30px;top:651.24px;font-size:13.3px;color:#a4a4aa;letter-spacing:0.000px;transform:scaleX(1.0800);transform-origin:0 0;">Sprache</div>
<div class="t" style="left:793.60px;top:651.24px;font-size:13.3px;color:#262626;letter-spacing:0.000px;transform:scaleX(1.0800);transform-origin:0 0;">Deutsch</div>
<div class="t" style="left:626.30px;top:671.14px;font-size:13.3px;color:#a4a4aa;letter-spacing:0.000px;transform:scaleX(1.1932);transform-origin:0 0;">Mitgliedernummer</div>
<div class="t" style="left:793.60px;top:671.14px;font-size:13.3px;color:#262626;letter-spacing:0.000px;transform:scaleX(1.0800);transform-origin:0 0;">ED23486z</div>
<div class="b" style="left:970.50px;top:524.50px;width:22.00px;height:22.00px;background:#f1f1f1;border-radius:4px"></div>
<svg class="b" style="left:976.50px;top:529.50px;" width="10" height="12" viewBox="0 0 10 12"><rect x="0" y="2.5" width="7" height="9.5" rx="0.8" fill="#5a5e63"/><rect x="2.8" y="0" width="7" height="9.5" rx="0.8" fill="#5a5e63" stroke="#f1f1f1" stroke-width="1"/></svg>
<div class="t" style="left:626.60px;top:728.42px;font-size:13.8px;color:#1f1f1f;letter-spacing:0.000px;transform:scaleX(1.1049);transform-origin:0 0;-webkit-text-stroke:0.15px #1f1f1f;">Saldo</div>
<div class="t" style="left:1137.00px;top:730.78px;font-size:11.6px;color:#4f7df7;letter-spacing:0.000px;transform:scaleX(1.1460);transform-origin:0 0;">Transaktion hinzufügen</div>
<div class="b" style="left:626.00px;top:754.00px;width:650.00px;height:1.00px;background:#e8e8e8"></div>
<div class="b" style="left:626.00px;top:773.00px;width:23.00px;height:22.00px;background:#fddede;border-radius:4px"></div>
<div class="b" style="left:631.50px;top:783.00px;width:12.00px;height:2.40px;background:#ef4444;border-radius:1px"></div>
<div class="t" style="left:658.00px;top:777.84px;font-size:13.3px;color:#262626;letter-spacing:0.000px;transform:scaleX(1.0710);transform-origin:0 0;">CHF 200.00</div>
<div class="t" style="left:626.60px;top:852.52px;font-size:13.8px;color:#1f1f1f;letter-spacing:0.000px;transform:scaleX(1.1089);transform-origin:0 0;-webkit-text-stroke:0.15px #1f1f1f;">Barcode</div>
<div class="t" style="left:1207.30px;top:854.87px;font-size:11.5px;color:#4f7df7;letter-spacing:0.000px;transform:scaleX(1.1440);transform-origin:0 0;">Aktionen</div>
<svg class="b" style="left:1262.00px;top:855.60px;" width="14" height="9.8" viewBox="0 0 14 9.8"><path d="M2 2 L7.0 7.8 L12 2" fill="none" stroke="#4f7df7" stroke-width="2" stroke-linecap="round" stroke-linejoin="round"/></svg>
<div class="b" style="left:626.00px;top:879.00px;width:650.00px;height:1.00px;background:#e8e8e8"></div>
<svg class="b" style="left:632px;top:906px" width="151" height="150" viewBox="0 0 21 21" preserveAspectRatio="none" shape-rendering="crispEdges"><rect x="0" y="0" width="1.02" height="1.02" fill="#000"/><rect x="1" y="0" width="1.02" height="1.02" fill="#000"/><rect x="2" y="0" width="1.02" height="1.02" fill="#000"/><rect x="3" y="0" width="1.02" height="1.02" fill="#000"/><rect x="4" y="0" width="1.02" height="1.02" fill="#000"/><rect x="5" y="0" width="1.02" height="1.02" fill="#000"/><rect x="6" y="0" width="1.02" height="1.02" fill="#000"/><rect x="8" y="0" width="1.02" height="1.02" fill="#000"/><rect x="11" y="0" width="1.02" height="1.02" fill="#000"/><rect x="12" y="0" width="1.02" height="1.02" fill="#000"/><rect x="14" y="0" width="1.02" height="1.02" fill="#000"/><rect x="15" y="0" width="1.02" height="1.02" fill="#000"/><rect x="16" y="0" width="1.02" height="1.02" fill="#000"/><rect x="17" y="0" width="1.02" height="1.02" fill="#000"/><rect x="18" y="0" width="1.02" height="1.02" fill="#000"/><rect x="19" y="0" width="1.02" height="1.02" fill="#000"/><rect x="20" y="0" width="1.02" height="1.02" fill="#000"/><rect x="0" y="1" width="1.02" height="1.02" fill="#000"/><rect x="6" y="1" width="1.02" height="1.02" fill="#000"/><rect x="8" y="1" width="1.02" height="1.02" fill="#000"/><rect x="9" y="1" width="1.02" height="1.02" fill="#000"/><rect x="11" y="1" width="1.02" height="1.02" fill="#000"/><rect x="14" y="1" width="1.02" height="1.02" fill="#000"/><rect x="20" y="1" width="1.02" height="1.02" fill="#000"/><rect x="0" y="2" width="1.02" height="1.02" fill="#000"/><rect x="2" y="2" width="1.02" height="1.02" fill="#000"/><rect x="3" y="2" width="1.02" height="1.02" fill="#000"/><rect x="4" y="2" width="1.02" height="1.02" fill="#000"/><rect x="6" y="2" width="1.02" height="1.02" fill="#000"/><rect x="10" y="2" width="1.02" height="1.02" fill="#000"/><rect x="14" y="2" width="1.02" height="1.02" fill="#000"/><rect x="16" y="2" width="1.02" height="1.02" fill="#000"/><rect x="17" y="2" width="1.02" height="1.02" fill="#000"/><rect x="18" y="2" width="1.02" height="1.02" fill="#000"/><rect x="20" y="2" width="1.02" height="1.02" fill="#000"/><rect x="0" y="3" width="1.02" height="1.02" fill="#000"/><rect x="2" y="3" width="1.02" height="1.02" fill="#000"/><rect x="3" y="3" width="1.02" height="1.02" fill="#000"/><rect x="4" y="3" width="1.02" height="1.02" fill="#000"/><rect x="6" y="3" width="1.02" height="1.02" fill="#000"/><rect x="8" y="3" width="1.02" height="1.02" fill="#000"/><rect x="9" y="3" width="1.02" height="1.02" fill="#000"/><rect x="10" y="3" width="1.02" height="1.02" fill="#000"/><rect x="14" y="3" width="1.02" height="1.02" fill="#000"/><rect x="16" y="3" width="1.02" height="1.02" fill="#000"/><rect x="17" y="3" width="1.02" height="1.02" fill="#000"/><rect x="18" y="3" width="1.02" height="1.02" fill="#000"/><rect x="20" y="3" width="1.02" height="1.02" fill="#000"/><rect x="0" y="4" width="1.02" height="1.02" fill="#000"/><rect x="2" y="4" width="1.02" height="1.02" fill="#000"/><rect x="3" y="4" width="1.02" height="1.02" fill="#000"/><rect x="4" y="4" width="1.02" height="1.02" fill="#000"/><rect x="6" y="4" width="1.02" height="1.02" fill="#000"/><rect x="14" y="4" width="1.02" height="1.02" fill="#000"/><rect x="16" y="4" width="1.02" height="1.02" fill="#000"/><rect x="17" y="4" width="1.02" height="1.02" fill="#000"/><rect x="18" y="4" width="1.02" height="1.02" fill="#000"/><rect x="20" y="4" width="1.02" height="1.02" fill="#000"/><rect x="0" y="5" width="1.02" height="1.02" fill="#000"/><rect x="6" y="5" width="1.02" height="1.02" fill="#000"/><rect x="10" y="5" width="1.02" height="1.02" fill="#000"/><rect x="14" y="5" width="1.02" height="1.02" fill="#000"/><rect x="20" y="5" width="1.02" height="1.02" fill="#000"/><rect x="0" y="6" width="1.02" height="1.02" fill="#000"/><rect x="1" y="6" width="1.02" height="1.02" fill="#000"/><rect x="2" y="6" width="1.02" height="1.02" fill="#000"/><rect x="3" y="6" width="1.02" height="1.02" fill="#000"/><rect x="4" y="6" width="1.02" height="1.02" fill="#000"/><rect x="5" y="6" width="1.02" height="1.02" fill="#000"/><rect x="6" y="6" width="1.02" height="1.02" fill="#000"/><rect x="8" y="6" width="1.02" height="1.02" fill="#000"/><rect x="10" y="6" width="1.02" height="1.02" fill="#000"/><rect x="12" y="6" width="1.02" height="1.02" fill="#000"/><rect x="14" y="6" width="1.02" height="1.02" fill="#000"/><rect x="15" y="6" width="1.02" height="1.02" fill="#000"/><rect x="16" y="6" width="1.02" height="1.02" fill="#000"/><rect x="17" y="6" width="1.02" height="1.02" fill="#000"/><rect x="18" y="6" width="1.02" height="1.02" fill="#000"/><rect x="19" y="6" width="1.02" height="1.02" fill="#000"/><rect x="20" y="6" width="1.02" height="1.02" fill="#000"/><rect x="8" y="7" width="1.02" height="1.02" fill="#000"/><rect x="9" y="7" width="1.02" height="1.02" fill="#000"/><rect x="10" y="7" width="1.02" height="1.02" fill="#000"/><rect x="0" y="8" width="1.02" height="1.02" fill="#000"/><rect x="2" y="8" width="1.02" height="1.02" fill="#000"/><rect x="3" y="8" width="1.02" height="1.02" fill="#000"/><rect x="5" y="8" width="1.02" height="1.02" fill="#000"/><rect x="6" y="8" width="1.02" height="1.02" fill="#000"/><rect x="7" y="8" width="1.02" height="1.02" fill="#000"/><rect x="10" y="8" width="1.02" height="1.02" fill="#000"/><rect x="14" y="8" width="1.02" height="1.02" fill="#000"/><rect x="17" y="8" width="1.02" height="1.02" fill="#000"/><rect x="19" y="8" width="1.02" height="1.02" fill="#000"/><rect x="20" y="8" width="1.02" height="1.02" fill="#000"/><rect x="0" y="9" width="1.02" height="1.02" fill="#000"/><rect x="1" y="9" width="1.02" height="1.02" fill="#000"/><rect x="2" y="9" width="1.02" height="1.02" fill="#000"/><rect x="5" y="9" width="1.02" height="1.02" fill="#000"/><rect x="8" y="9" width="1.02" height="1.02" fill="#000"/><rect x="10" y="9" width="1.02" height="1.02" fill="#000"/><rect x="12" y="9" width="1.02" height="1.02" fill="#000"/><rect x="13" y="9" width="1.02" height="1.02" fill="#000"/><rect x="14" y="9" width="1.02" height="1.02" fill="#000"/><rect x="16" y="9" width="1.02" height="1.02" fill="#000"/><rect x="18" y="9" width="1.02" height="1.02" fill="#000"/><rect x="19" y="9" width="1.02" height="1.02" fill="#000"/><rect x="20" y="9" width="1.02" height="1.02" fill="#000"/><rect x="0" y="10" width="1.02" height="1.02" fill="#000"/><rect x="1" y="10" width="1.02" height="1.02" fill="#000"/><rect x="2" y="10" width="1.02" height="1.02" fill="#000"/><rect x="3" y="10" width="1.02" height="1.02" fill="#000"/><rect x="5" y="10" width="1.02" height="1.02" fill="#000"/><rect x="6" y="10" width="1.02" height="1.02" fill="#000"/><rect x="8" y="10" width="1.02" height="1.02" fill="#000"/><rect x="9" y="10" width="1.02" height="1.02" fill="#000"/><rect x="12" y="10" width="1.02" height="1.02" fill="#000"/><rect x="15" y="10" width="1.02" height="1.02" fill="#000"/><rect x="17" y="10" width="1.02" height="1.02" fill="#000"/><rect x="18" y="10" width="1.02" height="1.02" fill="#000"/><rect x="19" y="10" width="1.02" height="1.02" fill="#000"/><rect x="2" y="11" width="1.02" height="1.02" fill="#000"/><rect x="4" y="11" width="1.02" height="1.02" fill="#000"/><rect x="5" y="11" width="1.02" height="1.02" fill="#000"/><rect x="8" y="11" width="1.02" height="1.02" fill="#000"/><rect x="9" y="11" width="1.02" height="1.02" fill="#000"/><rect x="12" y="11" width="1.02" height="1.02" fill="#000"/><rect x="15" y="11" width="1.02" height="1.02" fill="#000"/><rect x="16" y="11" width="1.02" height="1.02" fill="#000"/><rect x="17" y="11" width="1.02" height="1.02" fill="#000"/><rect x="18" y="11" width="1.02" height="1.02" fill="#000"/><rect x="20" y="11" width="1.02" height="1.02" fill="#000"/><rect x="0" y="12" width="1.02" height="1.02" fill="#000"/><rect x="1" y="12" width="1.02" height="1.02" fill="#000"/><rect x="3" y="12" width="1.02" height="1.02" fill="#000"/><rect x="4" y="12" width="1.02" height="1.02" fill="#000"/><rect x="5" y="12" width="1.02" height="1.02" fill="#000"/><rect x="6" y="12" width="1.02" height="1.02" fill="#000"/><rect x="7" y="12" width="1.02" height="1.02" fill="#000"/><rect x="8" y="12" width="1.02" height="1.02" fill="#000"/><rect x="9" y="12" width="1.02" height="1.02" fill="#000"/><rect x="11" y="12" width="1.02" height="1.02" fill="#000"/><rect x="13" y="12" width="1.02" height="1.02" fill="#000"/><rect x="14" y="12" width="1.02" height="1.02" fill="#000"/><rect x="20" y="12" width="1.02" height="1.02" fill="#000"/><rect x="8" y="13" width="1.02" height="1.02" fill="#000"/><rect x="11" y="13" width="1.02" height="1.02" fill="#000"/><rect x="13" y="13" width="1.02" height="1.02" fill="#000"/><rect x="14" y="13" width="1.02" height="1.02" fill="#000"/><rect x="15" y="13" width="1.02" height="1.02" fill="#000"/><rect x="16" y="13" width="1.02" height="1.02" fill="#000"/><rect x="20" y="13" width="1.02" height="1.02" fill="#000"/><rect x="0" y="14" width="1.02" height="1.02" fill="#000"/><rect x="1" y="14" width="1.02" height="1.02" fill="#000"/><rect x="2" y="14" width="1.02" height="1.02" fill="#000"/><rect x="3" y="14" width="1.02" height="1.02" fill="#000"/><rect x="4" y="14" width="1.02" height="1.02" fill="#000"/><rect x="5" y="14" width="1.02" height="1.02" fill="#000"/><rect x="6" y="14" width="1.02" height="1.02" fill="#000"/><rect x="8" y="14" width="1.02" height="1.02" fill="#000"/><rect x="9" y="14" width="1.02" height="1.02" fill="#000"/><rect x="14" y="14" width="1.02" height="1.02" fill="#000"/><rect x="16" y="14" width="1.02" height="1.02" fill="#000"/><rect x="17" y="14" width="1.02" height="1.02" fill="#000"/><rect x="18" y="14" width="1.02" height="1.02" fill="#000"/><rect x="19" y="14" width="1.02" height="1.02" fill="#000"/><rect x="0" y="15" width="1.02" height="1.02" fill="#000"/><rect x="6" y="15" width="1.02" height="1.02" fill="#000"/><rect x="8" y="15" width="1.02" height="1.02" fill="#000"/><rect x="9" y="15" width="1.02" height="1.02" fill="#000"/><rect x="12" y="15" width="1.02" height="1.02" fill="#000"/><rect x="13" y="15" width="1.02" height="1.02" fill="#000"/><rect x="16" y="15" width="1.02" height="1.02" fill="#000"/><rect x="17" y="15" width="1.02" height="1.02" fill="#000"/><rect x="18" y="15" width="1.02" height="1.02" fill="#000"/><rect x="0" y="16" width="1.02" height="1.02" fill="#000"/><rect x="2" y="16" width="1.02" height="1.02" fill="#000"/><rect x="3" y="16" width="1.02" height="1.02" fill="#000"/><rect x="4" y="16" width="1.02" height="1.02" fill="#000"/><rect x="6" y="16" width="1.02" height="1.02" fill="#000"/><rect x="9" y="16" width="1.02" height="1.02" fill="#000"/><rect x="10" y="16" width="1.02" height="1.02" fill="#000"/><rect x="11" y="16" width="1.02" height="1.02" fill="#000"/><rect x="14" y="16" width="1.02" height="1.02" fill="#000"/><rect x="0" y="17" width="1.02" height="1.02" fill="#000"/><rect x="2" y="17" width="1.02" height="1.02" fill="#000"/><rect x="3" y="17" width="1.02" height="1.02" fill="#000"/><rect x="4" y="17" width="1.02" height="1.02" fill="#000"/><rect x="6" y="17" width="1.02" height="1.02" fill="#000"/><rect x="8" y="17" width="1.02" height="1.02" fill="#000"/><rect x="9" y="17" width="1.02" height="1.02" fill="#000"/><rect x="16" y="17" width="1.02" height="1.02" fill="#000"/><rect x="17" y="17" width="1.02" height="1.02" fill="#000"/><rect x="19" y="17" width="1.02" height="1.02" fill="#000"/><rect x="0" y="18" width="1.02" height="1.02" fill="#000"/><rect x="2" y="18" width="1.02" height="1.02" fill="#000"/><rect x="3" y="18" width="1.02" height="1.02" fill="#000"/><rect x="4" y="18" width="1.02" height="1.02" fill="#000"/><rect x="6" y="18" width="1.02" height="1.02" fill="#000"/><rect x="8" y="18" width="1.02" height="1.02" fill="#000"/><rect x="10" y="18" width="1.02" height="1.02" fill="#000"/><rect x="12" y="18" width="1.02" height="1.02" fill="#000"/><rect x="16" y="18" width="1.02" height="1.02" fill="#000"/><rect x="17" y="18" width="1.02" height="1.02" fill="#000"/><rect x="0" y="19" width="1.02" height="1.02" fill="#000"/><rect x="6" y="19" width="1.02" height="1.02" fill="#000"/><rect x="9" y="19" width="1.02" height="1.02" fill="#000"/><rect x="14" y="19" width="1.02" height="1.02" fill="#000"/><rect x="15" y="19" width="1.02" height="1.02" fill="#000"/><rect x="16" y="19" width="1.02" height="1.02" fill="#000"/><rect x="18" y="19" width="1.02" height="1.02" fill="#000"/><rect x="0" y="20" width="1.02" height="1.02" fill="#000"/><rect x="1" y="20" width="1.02" height="1.02" fill="#000"/><rect x="2" y="20" width="1.02" height="1.02" fill="#000"/><rect x="3" y="20" width="1.02" height="1.02" fill="#000"/><rect x="4" y="20" width="1.02" height="1.02" fill="#000"/><rect x="5" y="20" width="1.02" height="1.02" fill="#000"/><rect x="6" y="20" width="1.02" height="1.02" fill="#000"/><rect x="8" y="20" width="1.02" height="1.02" fill="#000"/><rect x="9" y="20" width="1.02" height="1.02" fill="#000"/><rect x="10" y="20" width="1.02" height="1.02" fill="#000"/><rect x="11" y="20" width="1.02" height="1.02" fill="#000"/><rect x="12" y="20" width="1.02" height="1.02" fill="#000"/><rect x="13" y="20" width="1.02" height="1.02" fill="#000"/><rect x="14" y="20" width="1.02" height="1.02" fill="#000"/><rect x="19" y="20" width="1.02" height="1.02" fill="#000"/></svg>
<div class="t" style="left:626.30px;top:1100.84px;font-size:13.3px;color:#a4a4aa;letter-spacing:0.000px;transform:scaleX(1.1340);transform-origin:0 0;">4B8BUP8GIBMLX420</div>
<div class="t" style="left:626.60px;top:1149.02px;font-size:13.8px;color:#1f1f1f;letter-spacing:0.000px;transform:scaleX(1.1087);transform-origin:0 0;-webkit-text-stroke:0.15px #1f1f1f;">Google Maps</div>
<div class="b" style="left:626.00px;top:1174.50px;width:650.00px;height:1.00px;background:#e8e8e8"></div>
<div class="b" style="left:626.2px;top:1193px;width:648.4px;height:280.6px;overflow:hidden"><svg class="b" style="left:0;top:0" width="648.4" height="280.6" viewBox="0 0 648.4 280.6"><rect width="648.4" height="280.6" fill="#8ab4f8"/><g transform="translate(-287.6,0)"><polygon points="121.6,68.9 123.0,61.5 132.0,58.6 146.5,60.0 161.0,55.7 176.0,57.0 190.5,58.6 202.0,64.5 203.7,69.0 197.8,76.0 208.0,86.0 210.8,91.0 202.0,95.0 195.0,104.0 190.5,111.4 186.0,117.0 180.0,121.6 187.6,129.0 190.5,133.4 181.7,129.0 173.0,126.0 164.0,115.8 158.0,105.5 155.3,93.8 149.5,82.0 140.7,76.2 129.0,82.0 126.0,76.2" fill="#b4dfc0"/><polygon points="155.7,50.0 170.0,40.0 185.0,36.0 200.0,40.0 203.6,52.0 195.0,58.0 175.0,57.0 160.0,58.0" fill="#bcdcc8"/><polygon points="178.0,72.0 186.0,70.0 190.0,78.0 184.0,84.0 178.0,80.0" fill="#8ab4f8"/><polygon points="190.5,140.7 195.0,132.0 205.0,132.0 214.0,137.7 227.0,146.5 222.7,156.8 214.0,165.6 205.0,175.9 200.8,190.5 197.8,192.0 196.4,175.9 197.8,158.3 192.0,148.0" fill="#b4dfc0"/><polygon points="248.7,102.5 249.0,94.0 254.0,88.0 251.0,82.0 256.0,78.0 260.0,76.0 262.0,66.0 268.0,60.7 279.0,56.0 290.0,60.0 302.0,53.0 316.9,57.0 340.0,54.0 375.6,57.0 404.6,64.0 407.8,70.3 390.2,76.2 381.4,88.0 366.6,90.9 368.0,100.0 363.8,105.5 352.1,114.3 346.2,124.6 338.9,132.0 331.6,139.0 329.0,127.0 324.2,127.5 316.9,132.0 309.6,117.0 302.3,114.3 305.7,121.4 296.4,129.0 290.0,121.0 288.6,108.0 288.6,104.0 279.0,102.5 272.0,98.0 263.9,100.6 256.0,101.0" fill="#b4dfc0"/><polygon points="241.8,124.6 243.3,111.4 250.0,104.5 271.0,103.5 281.4,108.4 288.6,110.0 290.0,126.0 296.0,132.0 287.2,143.6 282.8,155.3 275.5,168.5 269.6,167.0 265.2,153.9 263.8,140.7 255.0,134.8 246.2,131.9" fill="#b4dfc0"/><polygon points="346.2,158.3 353.0,152.4 370.0,149.5 376.0,155.3 377.4,165.6 370.0,173.0 358.0,168.5 348.0,165.6" fill="#b4dfc0"/><polygon points="356.0,100.0 362.0,95.0 370.0,96.0 366.0,106.0 358.0,110.0" fill="#b4dfc0"/><polygon points="330.0,140.0 345.0,137.0 360.0,141.0 372.0,146.0 350.0,146.0 335.0,145.0" fill="#b4dfc0"/><polygon points="160.0,68.0 190.0,64.0 200.0,75.0 192.0,90.0 180.0,98.0 168.0,92.0 158.0,80.0" fill="#a3d9b2"/><polygon points="198.0,138.0 214.0,138.0 222.0,148.0 210.0,158.0 198.0,152.0" fill="#a3d9b2"/><polygon points="262.0,134.0 282.0,130.0 284.0,145.0 272.0,150.0 262.0,144.0" fill="#a3d9b2"/><polygon points="300.0,62.0 340.0,60.0 375.0,64.0 360.0,80.0 330.0,82.0 300.0,76.0" fill="#a3d9b2"/><polygon points="256.0,80.0 270.0,66.0 285.0,72.0 278.0,90.0 262.0,92.0" fill="#a3d9b2"/><polygon points="330.0,118.0 345.0,112.0 348.0,126.0 336.0,134.0" fill="#a3d9b2"/><polygon points="244.0,112.0 262.0,106.0 284.0,109.0 289.0,120.0 284.0,131.0 262.0,134.0 246.0,130.0" fill="#f3efe2"/><polygon points="289.0,110.0 304.0,116.0 304.0,123.0 296.0,128.0 290.0,121.0" fill="#f3efe2"/><polygon points="290.0,92.0 320.0,88.0 348.0,94.0 345.0,110.0 318.0,116.0 300.0,112.0" fill="#f3efe2"/><polygon points="158.0,98.0 172.0,100.0 170.0,112.0 162.0,110.0" fill="#f3efe2"/><polygon points="349.0,156.0 370.0,152.0 374.0,162.0 367.0,170.0 352.0,166.0" fill="#f3efe2"/><polygon points="266.0,152.0 280.0,150.0 276.0,166.0 270.0,166.0" fill="#f3efe2"/><polygon points="197.0,168.0 204.0,170.0 202.0,188.0 198.0,186.0" fill="#f3efe2"/><polygon points="180.0,18.0 190.0,11.0 200.0,14.0 203.0,30.0 195.0,44.0 185.0,42.0" fill="#e9ecef"/><polygon points="197.5,36.0 207.0,24.7 226.0,17.0 245.0,19.0 237.5,47.4 229.7,62.6 220.2,77.8 214.6,62.6 210.8,43.6" fill="#fbfbfb"/><polygon points="111.2,244.0 125.0,232.0 150.0,226.0 175.0,224.0 195.0,214.0 201.0,208.0 204.0,222.0 211.0,237.0 226.0,241.0 237.0,228.0 270.0,212.0 302.0,210.6 340.0,212.0 375.0,220.0 390.0,224.0 398.8,244.0 398.8,300.0 111.2,300.0" fill="#e8eaed"/></g><g transform="translate(0,0)"><polygon points="121.6,68.9 123.0,61.5 132.0,58.6 146.5,60.0 161.0,55.7 176.0,57.0 190.5,58.6 202.0,64.5 203.7,69.0 197.8,76.0 208.0,86.0 210.8,91.0 202.0,95.0 195.0,104.0 190.5,111.4 186.0,117.0 180.0,121.6 187.6,129.0 190.5,133.4 181.7,129.0 173.0,126.0 164.0,115.8 158.0,105.5 155.3,93.8 149.5,82.0 140.7,76.2 129.0,82.0 126.0,76.2" fill="#b4dfc0"/><polygon points="155.7,50.0 170.0,40.0 185.0,36.0 200.0,40.0 203.6,52.0 195.0,58.0 175.0,57.0 160.0,58.0" fill="#bcdcc8"/><polygon points="178.0,72.0 186.0,70.0 190.0,78.0 184.0,84.0 178.0,80.0" fill="#8ab4f8"/><polygon points="190.5,140.7 195.0,132.0 205.0,132.0 214.0,137.7 227.0,146.5 222.7,156.8 214.0,165.6 205.0,175.9 200.8,190.5 197.8,192.0 196.4,175.9 197.8,158.3 192.0,148.0" fill="#b4dfc0"/><polygon points="248.7,102.5 249.0,94.0 254.0,88.0 251.0,82.0 256.0,78.0 260.0,76.0 262.0,66.0 268.0,60.7 279.0,56.0 290.0,60.0 302.0,53.0 316.9,57.0 340.0,54.0 375.6,57.0 404.6,64.0 407.8,70.3 390.2,76.2 381.4,88.0 366.6,90.9 368.0,100.0 363.8,105.5 352.1,114.3 346.2,124.6 338.9,132.0 331.6,139.0 329.0,127.0 324.2,127.5 316.9,132.0 309.6,117.0 302.3,114.3 305.7,121.4 296.4,129.0 290.0,121.0 288.6,108.0 288.6,104.0 279.0,102.5 272.0,98.0 263.9,100.6 256.0,101.0" fill="#b4dfc0"/><polygon points="241.8,124.6 243.3,111.4 250.0,104.5 271.0,103.5 281.4,108.4 288.6,110.0 290.0,126.0 296.0,132.0 287.2,143.6 282.8,155.3 275.5,168.5 269.6,167.0 265.2,153.9 263.8,140.7 255.0,134.8 246.2,131.9" fill="#b4dfc0"/><polygon points="346.2,158.3 353.0,152.4 370.0,149.5 376.0,155.3 377.4,165.6 370.0,173.0 358.0,168.5 348.0,165.6" fill="#b4dfc0"/><polygon points="356.0,100.0 362.0,95.0 370.0,96.0 366.0,106.0 358.0,110.0" fill="#b4dfc0"/><polygon points="330.0,140.0 345.0,137.0 360.0,141.0 372.0,146.0 350.0,146.0 335.0,145.0" fill="#b4dfc0"/><polygon points="160.0,68.0 190.0,64.0 200.0,75.0 192.0,90.0 180.0,98.0 168.0,92.0 158.0,80.0" fill="#a3d9b2"/><polygon points="198.0,138.0 214.0,138.0 222.0,148.0 210.0,158.0 198.0,152.0" fill="#a3d9b2"/><polygon points="262.0,134.0 282.0,130.0 284.0,145.0 272.0,150.0 262.0,144.0" fill="#a3d9b2"/><polygon points="300.0,62.0 340.0,60.0 375.0,64.0 360.0,80.0 330.0,82.0 300.0,76.0" fill="#a3d9b2"/><polygon points="256.0,80.0 270.0,66.0 285.0,72.0 278.0,90.0 262.0,92.0" fill="#a3d9b2"/><polygon points="330.0,118.0 345.0,112.0 348.0,126.0 336.0,134.0" fill="#a3d9b2"/><polygon points="244.0,112.0 262.0,106.0 284.0,109.0 289.0,120.0 284.0,131.0 262.0,134.0 246.0,130.0" fill="#f3efe2"/><polygon points="289.0,110.0 304.0,116.0 304.0,123.0 296.0,128.0 290.0,121.0" fill="#f3efe2"/><polygon points="290.0,92.0 320.0,88.0 348.0,94.0 345.0,110.0 318.0,116.0 300.0,112.0" fill="#f3efe2"/><polygon points="158.0,98.0 172.0,100.0 170.0,112.0 162.0,110.0" fill="#f3efe2"/><polygon points="349.0,156.0 370.0,152.0 374.0,162.0 367.0,170.0 352.0,166.0" fill="#f3efe2"/><polygon points="266.0,152.0 280.0,150.0 276.0,166.0 270.0,166.0" fill="#f3efe2"/><polygon points="197.0,168.0 204.0,170.0 202.0,188.0 198.0,186.0" fill="#f3efe2"/><polygon points="180.0,18.0 190.0,11.0 200.0,14.0 203.0,30.0 195.0,44.0 185.0,42.0" fill="#e9ecef"/><polygon points="197.5,36.0 207.0,24.7 226.0,17.0 245.0,19.0 237.5,47.4 229.7,62.6 220.2,77.8 214.6,62.6 210.8,43.6" fill="#fbfbfb"/><polygon points="111.2,244.0 125.0,232.0 150.0,226.0 175.0,224.0 195.0,214.0 201.0,208.0 204.0,222.0 211.0,237.0 226.0,241.0 237.0,228.0 270.0,212.0 302.0,210.6 340.0,212.0 375.0,220.0 390.0,224.0 398.8,244.0 398.8,300.0 111.2,300.0" fill="#e8eaed"/></g><g transform="translate(287.6,0)"><polygon points="121.6,68.9 123.0,61.5 132.0,58.6 146.5,60.0 161.0,55.7 176.0,57.0 190.5,58.6 202.0,64.5 203.7,69.0 197.8,76.0 208.0,86.0 210.8,91.0 202.0,95.0 195.0,104.0 190.5,111.4 186.0,117.0 180.0,121.6 187.6,129.0 190.5,133.4 181.7,129.0 173.0,126.0 164.0,115.8 158.0,105.5 155.3,93.8 149.5,82.0 140.7,76.2 129.0,82.0 126.0,76.2" fill="#b4dfc0"/><polygon points="155.7,50.0 170.0,40.0 185.0,36.0 200.0,40.0 203.6,52.0 195.0,58.0 175.0,57.0 160.0,58.0" fill="#bcdcc8"/><polygon points="178.0,72.0 186.0,70.0 190.0,78.0 184.0,84.0 178.0,80.0" fill="#8ab4f8"/><polygon points="190.5,140.7 195.0,132.0 205.0,132.0 214.0,137.7 227.0,146.5 222.7,156.8 214.0,165.6 205.0,175.9 200.8,190.5 197.8,192.0 196.4,175.9 197.8,158.3 192.0,148.0" fill="#b4dfc0"/><polygon points="248.7,102.5 249.0,94.0 254.0,88.0 251.0,82.0 256.0,78.0 260.0,76.0 262.0,66.0 268.0,60.7 279.0,56.0 290.0,60.0 302.0,53.0 316.9,57.0 340.0,54.0 375.6,57.0 404.6,64.0 407.8,70.3 390.2,76.2 381.4,88.0 366.6,90.9 368.0,100.0 363.8,105.5 352.1,114.3 346.2,124.6 338.9,132.0 331.6,139.0 329.0,127.0 324.2,127.5 316.9,132.0 309.6,117.0 302.3,114.3 305.7,121.4 296.4,129.0 290.0,121.0 288.6,108.0 288.6,104.0 279.0,102.5 272.0,98.0 263.9,100.6 256.0,101.0" fill="#b4dfc0"/><polygon points="241.8,124.6 243.3,111.4 250.0,104.5 271.0,103.5 281.4,108.4 288.6,110.0 290.0,126.0 296.0,132.0 287.2,143.6 282.8,155.3 275.5,168.5 269.6,167.0 265.2,153.9 263.8,140.7 255.0,134.8 246.2,131.9" fill="#b4dfc0"/><polygon points="346.2,158.3 353.0,152.4 370.0,149.5 376.0,155.3 377.4,165.6 370.0,173.0 358.0,168.5 348.0,165.6" fill="#b4dfc0"/><polygon points="356.0,100.0 362.0,95.0 370.0,96.0 366.0,106.0 358.0,110.0" fill="#b4dfc0"/><polygon points="330.0,140.0 345.0,137.0 360.0,141.0 372.0,146.0 350.0,146.0 335.0,145.0" fill="#b4dfc0"/><polygon points="160.0,68.0 190.0,64.0 200.0,75.0 192.0,90.0 180.0,98.0 168.0,92.0 158.0,80.0" fill="#a3d9b2"/><polygon points="198.0,138.0 214.0,138.0 222.0,148.0 210.0,158.0 198.0,152.0" fill="#a3d9b2"/><polygon points="262.0,134.0 282.0,130.0 284.0,145.0 272.0,150.0 262.0,144.0" fill="#a3d9b2"/><polygon points="300.0,62.0 340.0,60.0 375.0,64.0 360.0,80.0 330.0,82.0 300.0,76.0" fill="#a3d9b2"/><polygon points="256.0,80.0 270.0,66.0 285.0,72.0 278.0,90.0 262.0,92.0" fill="#a3d9b2"/><polygon points="330.0,118.0 345.0,112.0 348.0,126.0 336.0,134.0" fill="#a3d9b2"/><polygon points="244.0,112.0 262.0,106.0 284.0,109.0 289.0,120.0 284.0,131.0 262.0,134.0 246.0,130.0" fill="#f3efe2"/><polygon points="289.0,110.0 304.0,116.0 304.0,123.0 296.0,128.0 290.0,121.0" fill="#f3efe2"/><polygon points="290.0,92.0 320.0,88.0 348.0,94.0 345.0,110.0 318.0,116.0 300.0,112.0" fill="#f3efe2"/><polygon points="158.0,98.0 172.0,100.0 170.0,112.0 162.0,110.0" fill="#f3efe2"/><polygon points="349.0,156.0 370.0,152.0 374.0,162.0 367.0,170.0 352.0,166.0" fill="#f3efe2"/><polygon points="266.0,152.0 280.0,150.0 276.0,166.0 270.0,166.0" fill="#f3efe2"/><polygon points="197.0,168.0 204.0,170.0 202.0,188.0 198.0,186.0" fill="#f3efe2"/><polygon points="180.0,18.0 190.0,11.0 200.0,14.0 203.0,30.0 195.0,44.0 185.0,42.0" fill="#e9ecef"/><polygon points="197.5,36.0 207.0,24.7 226.0,17.0 245.0,19.0 237.5,47.4 229.7,62.6 220.2,77.8 214.6,62.6 210.8,43.6" fill="#fbfbfb"/><polygon points="111.2,244.0 125.0,232.0 150.0,226.0 175.0,224.0 195.0,214.0 201.0,208.0 204.0,222.0 211.0,237.0 226.0,241.0 237.0,228.0 270.0,212.0 302.0,210.6 340.0,212.0 375.0,220.0 390.0,224.0 398.8,244.0 398.8,300.0 111.2,300.0" fill="#e8eaed"/></g><path d="M111.2 0 V280.6 M399.3 0 V280.6" stroke="#a4727e" stroke-width="1" stroke-dasharray="6 2" fill="none"/><path d="M0 140 H648.4" stroke="#9a6f78" stroke-opacity="0.8" stroke-width="1.8" stroke-dasharray="3.6 2.2" fill="none"/><path d="M111.2 52 L120 58.6 V70.3 L102.6 89.4 L111.2 96.7 M111.4 140.7 L127.5 136.3 L131.9 140.7 L136.3 149.5 L118.7 146.5 L117.2 180.2 L111.2 186" stroke="#a4727e" stroke-width="1" stroke-dasharray="3 1.5" fill="none"/><path d="M399.3 52 L408.1 58.6 V70.3 L390.70000000000005 89.4 L399.3 96.7 M399.5 140.7 L415.6 136.3 L420.0 140.7 L424.40000000000003 149.5 L406.8 146.5 L405.3 180.2 L399.3 186" stroke="#a4727e" stroke-width="1" stroke-dasharray="3 1.5" fill="none"/></svg></div>
<div class="b" style="left:637.80px;top:1203.70px;width:214.20px;height:45.10px;background:#fff;border-radius:2px;box-shadow:0 1px 4px rgba(0,0,0,0.3)"></div>
<div class="b" style="left:737.40px;top:1203.70px;width:1.00px;height:45.10px;background:#ebebeb"></div>
<div class="t" style="left:664.00px;top:1219.11px;font-size:18.3px;color:#000;letter-spacing:0.000px;transform:scaleX(1.0974);transform-origin:0 0;-webkit-text-stroke:0.15px #000;">Karte</div>
<div class="t" style="left:764.30px;top:1219.11px;font-size:18.3px;color:#565656;letter-spacing:0.000px;transform:scaleX(1.1051);transform-origin:0 0;">Satellit</div>
<div class="b" style="left:1219.00px;top:1203.70px;width:44.80px;height:45.10px;background:#fff;border-radius:2px;box-shadow:0 1px 4px rgba(0,0,0,0.3)"></div>
<svg class="b" style="left:1226.60px;top:1217.80px;" width="20.5" height="19" viewBox="0 0 20.5 19"><path d="M1 6 V1 H6 M14.5 1 H19.5 V6 M19.5 13 V18 H14.5 M6 18 H1 V13" fill="none" stroke="#666" stroke-width="2.4"/></svg>
<div class="b" style="left:1219.00px;top:1275.00px;width:44.80px;height:44.80px;background:#fff;border-radius:2px;box-shadow:0 1px 4px rgba(0,0,0,0.3)"></div>
<svg class="b" style="left:1231.00px;top:1280.00px;" width="20" height="35" viewBox="0 0 20 35"><circle cx="10" cy="5.5" r="4.6" fill="#fbb400" stroke="#c98d00" stroke-width="0.8"/><path d="M4 12 Q4 9.5 6.5 9.5 H13.5 Q16 9.5 16 12 L17 23 L14.5 23 L13.8 33 H10.6 L10 25 L9.4 33 H6.2 L5.5 23 L3 23Z" fill="#fbb400" stroke="#c98d00" stroke-width="0.8"/><path d="M7 10 L10 15 L13 10" fill="#e38b00"/></svg>
<div class="b" style="left:1219.00px;top:1356.70px;width:44.80px;height:89.90px;background:#fff;border-radius:2px;box-shadow:0 1px 4px rgba(0,0,0,0.3)"></div>
<div class="b" style="left:1224.00px;top:1401.00px;width:35.00px;height:1.00px;background:#e6e6e6"></div>
<svg class="b" style="left:1231.50px;top:1368.50px;" width="20" height="20" viewBox="0 0 20 20"><path d="M10 1 V19 M1 10 H19" stroke="#666" stroke-width="3.2"/></svg>
<div class="b" style="left:1231.50px;top:1423.00px;width:20.00px;height:3.20px;background:#c4c4c4"></div>
<svg class="b" style="left:865.50px;top:1292.00px;" width="30" height="41" viewBox="0 0 30 41"><path d="M14.5 40.5 Q12 30 5 22 Q0.5 17 0.5 12.8 A14 12.3 0 0 1 28.5 12.8 Q28.5 17 24 22 Q17 30 14.5 40.5Z" fill="#ea4335" stroke="#c5221f" stroke-width="1"/><circle cx="14.5" cy="13" r="5" fill="#a52714"/></svg>
<div class="t" style="left:637.5px;top:1446.5px;font-size:21px;letter-spacing:-0.3px;-webkit-text-stroke:0.4px currentColor"><span style="color:#4285f4">G</span><span style="color:#ea4335">o</span><span style="color:#fbbc05">o</span><span style="color:#4285f4">g</span><span style="color:#34a853">l</span><span style="color:#ea4335">e</span></div>
<div class="b" style="left:956.00px;top:1458.00px;width:318.60px;height:15.60px;background:rgba(245,245,245,0.75)"></div>
<div class="t" style="left:960.80px;top:1461.63px;font-size:10.6px;color:#222;letter-spacing:0.000px;transform:scaleX(1.0500);transform-origin:0 0;">Kurzbefehle</div>
<div class="t" style="left:1034.20px;top:1461.63px;font-size:10.6px;color:#222;letter-spacing:0.000px;transform:scaleX(1.0869);transform-origin:0 0;">Kartendaten © 2023</div>
<div class="t" style="left:1152.40px;top:1461.63px;font-size:10.6px;color:#222;letter-spacing:0.000px;transform:scaleX(1.0859);transform-origin:0 0;">Nutzungsbedingungen</div>
<div class="b" style="left:1318.00px;top:286.00px;width:698.00px;height:216.50px;background:#fff;border:1px solid #eeeeee;border-radius:9px;box-shadow:0 1.5px 2.5px rgba(0,0,0,0.06)"></div>
<div class="t" style="left:1340.60px;top:305.58px;font-size:14.2px;color:#1f1f1f;letter-spacing:0.000px;transform:scaleX(1.1558);transform-origin:0 0;-webkit-text-stroke:0.15px #1f1f1f;">Kennzahlen</div>
<div class="t" style="left:1446.40px;top:306.15px;font-size:11.4px;color:#4f7df7;letter-spacing:0.000px;transform:scaleX(0.9561);transform-origin:0 0;">CHF</div>
<svg class="b" style="left:1472.30px;top:305.30px;" width="14.6" height="10.2" viewBox="0 0 14.6 10.2"><path d="M2 2 L7.3 8.2 L12.6 2" fill="none" stroke="#4f7df7" stroke-width="2.1" stroke-linecap="round" stroke-linejoin="round"/></svg>
<div class="b" style="left:1342.20px;top:339.20px;width:204.40px;height:144.50px;background:#eef1fd;border-radius:6px"></div>
<svg class="b" style="left:1360.00px;top:356.90px;" width="36" height="36" viewBox="0 0 36 36"><circle cx="18" cy="18" r="18" fill="#6366f1"/></svg>
<div class="t" style="left:1365.50px;top:409.05px;font-size:23.8px;color:#262626;letter-spacing:0.000px;transform:scaleX(1.0935);transform-origin:0 0;font-weight:bold;">200.00</div>
<div class="t" style="left:1365.50px;top:445.55px;font-size:14px;color:#6b6ff0;letter-spacing:0.000px;transform:scaleX(1.0991);transform-origin:0 0;">Umsatz in CHF</div>
<div class="b" style="left:1565.10px;top:339.20px;width:204.40px;height:144.50px;background:#fff5e6;border-radius:6px"></div>
<svg class="b" style="left:1582.90px;top:356.90px;" width="36" height="36" viewBox="0 0 36 36"><circle cx="18" cy="18" r="18" fill="#ffa10a"/></svg>
<div class="t" style="left:1588.40px;top:409.05px;font-size:23.8px;color:#262626;letter-spacing:0.000px;font-weight:bold;">5</div>
<div class="t" style="left:1588.40px;top:445.55px;font-size:14px;color:#f59e0b;letter-spacing:0.000px;transform:scaleX(1.1815);transform-origin:0 0;">Buchungen</div>
<div class="b" style="left:1787.00px;top:339.20px;width:204.40px;height:144.50px;background:#dcf8ef;border-radius:6px"></div>
<svg class="b" style="left:1804.80px;top:356.90px;" width="36" height="36" viewBox="0 0 36 36"><circle cx="18" cy="18" r="18" fill="#19b886"/></svg>
<div class="t" style="left:1810.30px;top:409.05px;font-size:23.8px;color:#262626;letter-spacing:0.000px;font-weight:bold;">3</div>
<div class="t" style="left:1810.30px;top:445.55px;font-size:14px;color:#19ad7c;letter-spacing:0.000px;transform:scaleX(1.1634);transform-origin:0 0;">Offene Rechnungen</div>
<svg class="b" style="left:1367.00px;top:366.00px;" width="22" height="19" viewBox="0 0 22 19"><ellipse cx="14.5" cy="3.5" rx="6.3" ry="3" fill="#fff"/><path d="M8.2 5 Q14.5 9 20.8 5 V7.5 Q14.5 11.5 8.2 7.5Z" fill="#fff"/><path d="M8.2 9 Q14.5 13 20.8 9 V11.5 Q14.5 15.5 8.2 11.5Z" fill="#fff"/><ellipse cx="7.5" cy="9" rx="6.5" ry="3" fill="#fff" stroke="#6366f1" stroke-width="1"/><path d="M1 11 Q7.5 15 14 11 V13.5 Q7.5 17.5 1 13.5Z" fill="#fff"/><path d="M1 15 Q7.5 19 14 15 V16 Q7.5 20 1 16Z" fill="#fff"/></svg>
<svg class="b" style="left:1590.00px;top:368.00px;" width="22" height="15" viewBox="0 0 22 15"><path d="M1.5 0 H20.5 Q22 0 22 1.5 V4.5 Q19.8 7.5 22 10.5 V13.5 Q22 15 20.5 15 H1.5 Q0 15 0 13.5 V10.5 Q2.2 7.5 0 4.5 V1.5 Q0 0 1.5 0Z" fill="#fff"/><rect x="4.5" y="3.5" width="13" height="8" fill="#ffa10a"/><rect x="6" y="5" width="10" height="5" fill="#fff"/></svg>
<svg class="b" style="left:1815.00px;top:366.00px;" width="13" height="17" viewBox="0 0 13 17"><path d="M0 0 H8.5 L13 4.5 V17 H0Z" fill="#fff"/><path d="M8.5 0 V4.5 H13" fill="#19b886"/><rect x="2" y="2" width="4" height="1.4" fill="#19b886"/><rect x="2" y="4.5" width="4" height="1.4" fill="#19b886"/><rect x="2.3" y="7.8" width="8.4" height="4" fill="none" stroke="#19b886" stroke-width="1.3"/><rect x="7.5" y="13.8" width="3.5" height="1.3" fill="#19b886"/></svg>
<div class="b" style="left:1318.00px;top:519.50px;width:698.00px;height:1081.00px;background:#fff;border:1px solid #eeeeee;border-radius:9px;box-shadow:0 1.5px 2.5px rgba(0,0,0,0.06)"></div>
<div class="t" style="left:1341.10px;top:539.48px;font-size:14.2px;color:#1f1f1f;letter-spacing:0.000px;transform:scaleX(1.0438);transform-origin:0 0;-webkit-text-stroke:0.15px #1f1f1f;">Buchungen</div>
<div class="b" style="left:1340.00px;top:574.00px;width:653.00px;height:1.00px;background:#e4e4e4"></div>
<div class="b" style="left:1342.00px;top:620.00px;width:649.00px;height:87.80px;background:#fff;border:1px solid #f0f0f0;border-radius:8px;box-shadow:0 1.5px 2px rgba(0,0,0,0.07)"></div>
<div class="b" style="left:1342.00px;top:620.00px;width:8.00px;height:87.80px;background:#f5a00b;border-radius:8px 0 0 8px;clip-path:inset(0 4.4px 0 0)"></div>
<div class="b" style="left:1360.20px;top:602.00px;width:112.50px;height:22.00px;background:#fff3e2;border-radius:11px;box-shadow:0 1px 2px rgba(0,0,0,0.08)"></div>
<svg class="b" style="left:1372.00px;top:608.00px;" width="11" height="10" viewBox="0 0 11 10"><path d="M0.8 5 Q5.5 -0.5 10.2 5 Q5.5 10.5 0.8 5Z" fill="none" stroke="#f59e0b" stroke-width="1.3"/><path d="M1 0.5 L10 9.5" stroke="#f59e0b" stroke-width="1.4"/></svg>
<div class="t" style="left:1387.60px;top:607.49px;font-size:11px;color:#f59e0b;letter-spacing:0.000px;transform:scaleX(1.1606);transform-origin:0 0;">Geschlossen</div>
<div class="t" style="left:1360.50px;top:631.94px;font-size:13.3px;color:#1f1f1f;letter-spacing:0.000px;transform:scaleX(1.1686);transform-origin:0 0;-webkit-text-stroke:0.15px #1f1f1f;">Deutsch (Aufbau Kurs) - Modulbuchung</div>
<div class="t" style="left:1642.90px;top:631.94px;font-size:13.3px;color:#a4a4aa;letter-spacing:0.000px;transform:scaleX(1.0530);transform-origin:0 0;">0323A</div>
<div class="t" style="left:1910.00px;top:631.77px;font-size:11.5px;color:#4f7df7;letter-spacing:0.000px;transform:scaleX(1.1395);transform-origin:0 0;">Aktionen</div>
<svg class="b" style="left:1965.00px;top:632.50px;" width="14" height="9.8" viewBox="0 0 14 9.8"><path d="M2 2 L7.0 7.8 L12 2" fill="none" stroke="#4f7df7" stroke-width="2" stroke-linecap="round" stroke-linejoin="round"/></svg>
<div class="t" style="left:1360.50px;top:661.56px;font-size:12.8px;color:#a4a4aa;letter-spacing:0.000px;transform:scaleX(1.1574);transform-origin:0 0;">Status</div>
<svg class="b" style="left:1360.20px;top:680.80px;" width="15.5" height="15.5" viewBox="0 0 15.5 15.5"><circle cx="7.75" cy="7.75" r="7.75" fill="#1cb482"/><path d="M4.1850000000000005 8.06 L6.82 10.540000000000001 L11.47 5.58" fill="none" stroke="#fff" stroke-width="2.3249999999999997" stroke-linecap="round" stroke-linejoin="round"/></svg>
<div class="t" style="left:1382.90px;top:681.46px;font-size:12.8px;color:#262626;letter-spacing:0.000px;transform:scaleX(1.1176);transform-origin:0 0;">Aktiv</div>
<div class="t" style="left:1441.80px;top:661.56px;font-size:12.8px;color:#a4a4aa;letter-spacing:0.000px;transform:scaleX(1.1922);transform-origin:0 0;">Nummer</div>
<div class="t" style="left:1441.80px;top:681.46px;font-size:12.8px;color:#262626;letter-spacing:0.000px;transform:scaleX(1.0652);transform-origin:0 0;">160940</div>
<div class="t" style="left:1527.90px;top:661.56px;font-size:12.8px;color:#a4a4aa;letter-spacing:0.000px;transform:scaleX(1.2047);transform-origin:0 0;">Gebucht am</div>
<div class="t" style="left:1527.90px;top:681.46px;font-size:12.8px;color:#262626;letter-spacing:0.000px;transform:scaleX(0.9634);transform-origin:0 0;">17.01.2023 13:26</div>
<div class="t" style="left:1652.30px;top:661.56px;font-size:12.8px;color:#a4a4aa;letter-spacing:0.000px;transform:scaleX(1.2057);transform-origin:0 0;">Total</div>
<div class="t" style="left:1652.30px;top:681.46px;font-size:12.8px;color:#262626;letter-spacing:0.000px;transform:scaleX(1.0534);transform-origin:0 0;">CHF 0.00</div>
<div class="b" style="left:1342.00px;top:743.66px;width:649.00px;height:87.80px;background:#fff;border:1px solid #f0f0f0;border-radius:8px;box-shadow:0 1.5px 2px rgba(0,0,0,0.07)"></div>
<div class="b" style="left:1342.00px;top:743.66px;width:8.00px;height:87.80px;background:#f5a00b;border-radius:8px 0 0 8px;clip-path:inset(0 4.4px 0 0)"></div>
<div class="b" style="left:1360.20px;top:725.66px;width:110.00px;height:22.00px;background:#dcf7ec;border-radius:11px;box-shadow:0 1px 2px rgba(0,0,0,0.08)"></div>
<svg class="b" style="left:1372.00px;top:732.16px;" width="9.5" height="9.5" viewBox="0 0 9.5 9.5"><circle cx="4.75" cy="4.75" r="4.75" fill="#15a06a"/><path d="M2.5650000000000004 4.94 L4.18 6.460000000000001 L7.03 3.42" fill="none" stroke="#fff" stroke-width="1.425" stroke-linecap="round" stroke-linejoin="round"/></svg>
<div class="t" style="left:1386.50px;top:731.15px;font-size:11px;color:#15a06a;letter-spacing:0.000px;transform:scaleX(1.0685);transform-origin:0 0;">Freigegeben</div>
<div class="t" style="left:1360.50px;top:755.60px;font-size:13.3px;color:#1f1f1f;letter-spacing:0.000px;transform:scaleX(1.1719);transform-origin:0 0;-webkit-text-stroke:0.15px #1f1f1f;">Deutsch (Grundkurs) - (Mustpay Sammel Count)</div>
<div class="t" style="left:1705.00px;top:755.60px;font-size:13.3px;color:#a4a4aa;letter-spacing:0.000px;transform:scaleX(1.0169);transform-origin:0 0;">DEW-1022</div>
<div class="t" style="left:1910.00px;top:755.43px;font-size:11.5px;color:#4f7df7;letter-spacing:0.000px;transform:scaleX(1.1395);transform-origin:0 0;">Aktionen</div>
<svg class="b" style="left:1965.00px;top:756.16px;" width="14" height="9.8" viewBox="0 0 14 9.8"><path d="M2 2 L7.0 7.8 L12 2" fill="none" stroke="#4f7df7" stroke-width="2" stroke-linecap="round" stroke-linejoin="round"/></svg>
<div class="t" style="left:1360.50px;top:785.22px;font-size:12.8px;color:#a4a4aa;letter-spacing:0.000px;transform:scaleX(1.1574);transform-origin:0 0;">Status</div>
<svg class="b" style="left:1360.20px;top:804.46px;" width="15.5" height="15.5" viewBox="0 0 15.5 15.5"><circle cx="7.75" cy="7.75" r="7.75" fill="#1cb482"/><path d="M4.1850000000000005 8.06 L6.82 10.540000000000001 L11.47 5.58" fill="none" stroke="#fff" stroke-width="2.3249999999999997" stroke-linecap="round" stroke-linejoin="round"/></svg>
<div class="t" style="left:1382.90px;top:805.12px;font-size:12.8px;color:#262626;letter-spacing:0.000px;transform:scaleX(1.1176);transform-origin:0 0;">Aktiv</div>
<div class="t" style="left:1441.80px;top:785.22px;font-size:12.8px;color:#a4a4aa;letter-spacing:0.000px;transform:scaleX(1.1922);transform-origin:0 0;">Nummer</div>
<div class="t" style="left:1441.80px;top:805.12px;font-size:12.8px;color:#262626;letter-spacing:0.000px;transform:scaleX(1.0699);transform-origin:0 0;">160882</div>
<div class="t" style="left:1527.90px;top:785.22px;font-size:12.8px;color:#a4a4aa;letter-spacing:0.000px;transform:scaleX(1.2047);transform-origin:0 0;">Gebucht am</div>
<div class="t" style="left:1527.90px;top:805.12px;font-size:12.8px;color:#262626;letter-spacing:0.000px;transform:scaleX(1.0266);transform-origin:0 0;">26.10.2022 10:49</div>
<div class="t" style="left:1657.70px;top:785.22px;font-size:12.8px;color:#a4a4aa;letter-spacing:0.000px;transform:scaleX(1.2057);transform-origin:0 0;">Total</div>
<div class="t" style="left:1657.70px;top:805.12px;font-size:12.8px;color:#262626;letter-spacing:0.000px;transform:scaleX(1.0479);transform-origin:0 0;">CHF 5.00</div>
<div class="b" style="left:1342.00px;top:867.32px;width:649.00px;height:87.80px;background:#fff;border:1px solid #f0f0f0;border-radius:8px;box-shadow:0 1.5px 2px rgba(0,0,0,0.07)"></div>
<div class="b" style="left:1342.00px;top:867.32px;width:8.00px;height:87.80px;background:#f5a00b;border-radius:8px 0 0 8px;clip-path:inset(0 4.4px 0 0)"></div>
<div class="b" style="left:1360.20px;top:849.32px;width:189.40px;height:22.00px;background:#eceffd;border-radius:11px;box-shadow:0 1px 2px rgba(0,0,0,0.08)"></div>
<svg class="b" style="left:1371.50px;top:856.32px;" width="10" height="9" viewBox="0 0 10 9"><path d="M1 4.5 L4 7.5 L9 1" fill="none" stroke="#3b2a8a" stroke-width="1.8"/></svg>
<div class="t" style="left:1385.50px;top:854.81px;font-size:11px;color:#6a5ae0;letter-spacing:0.000px;transform:scaleX(1.2186);transform-origin:0 0;">Garantierte Durchführung</div>
<div class="t" style="left:1360.50px;top:879.26px;font-size:13.3px;color:#1f1f1f;letter-spacing:0.000px;transform:scaleX(1.1756);transform-origin:0 0;-webkit-text-stroke:0.15px #1f1f1f;">Deutsch (Grundkurs) - (Ticketing)</div>
<div class="t" style="left:1602.30px;top:879.26px;font-size:13.3px;color:#a4a4aa;letter-spacing:0.000px;transform:scaleX(0.9287);transform-origin:0 0;">DET-1122</div>
<div class="t" style="left:1910.00px;top:879.09px;font-size:11.5px;color:#4f7df7;letter-spacing:0.000px;transform:scaleX(1.1395);transform-origin:0 0;">Aktionen</div>
<svg class="b" style="left:1965.00px;top:879.82px;" width="14" height="9.8" viewBox="0 0 14 9.8"><path d="M2 2 L7.0 7.8 L12 2" fill="none" stroke="#4f7df7" stroke-width="2" stroke-linecap="round" stroke-linejoin="round"/></svg>
<div class="t" style="left:1360.50px;top:908.88px;font-size:12.8px;color:#a4a4aa;letter-spacing:0.000px;transform:scaleX(1.1574);transform-origin:0 0;">Status</div>
<svg class="b" style="left:1360.20px;top:928.12px;" width="15.5" height="15.5" viewBox="0 0 15.5 15.5"><circle cx="7.75" cy="7.75" r="7.75" fill="#1cb482"/><path d="M4.1850000000000005 8.06 L6.82 10.540000000000001 L11.47 5.58" fill="none" stroke="#fff" stroke-width="2.3249999999999997" stroke-linecap="round" stroke-linejoin="round"/></svg>
<div class="t" style="left:1382.90px;top:928.78px;font-size:12.8px;color:#262626;letter-spacing:0.000px;transform:scaleX(1.1176);transform-origin:0 0;">Aktiv</div>
<div class="t" style="left:1441.60px;top:908.88px;font-size:12.8px;color:#a4a4aa;letter-spacing:0.000px;transform:scaleX(1.1922);transform-origin:0 0;">Nummer</div>
<div class="t" style="left:1441.60px;top:928.78px;font-size:12.8px;color:#262626;letter-spacing:0.000px;transform:scaleX(1.0816);transform-origin:0 0;">160864</div>
<div class="t" style="left:1527.70px;top:908.88px;font-size:12.8px;color:#a4a4aa;letter-spacing:0.000px;transform:scaleX(1.2047);transform-origin:0 0;">Gebucht am</div>
<div class="t" style="left:1527.70px;top:928.78px;font-size:12.8px;color:#262626;letter-spacing:0.000px;transform:scaleX(0.9774);transform-origin:0 0;">21.10.2022 10:26</div>
<div class="t" style="left:1652.60px;top:908.88px;font-size:12.8px;color:#a4a4aa;letter-spacing:0.000px;transform:scaleX(1.2057);transform-origin:0 0;">Total</div>
<div class="t" style="left:1652.60px;top:928.78px;font-size:12.8px;color:#262626;letter-spacing:0.000px;transform:scaleX(0.9985);transform-origin:0 0;">CHF 10.00</div>
<div class="b" style="left:1342.00px;top:990.98px;width:649.00px;height:87.80px;background:#fff;border:1px solid #f0f0f0;border-radius:8px;box-shadow:0 1.5px 2px rgba(0,0,0,0.07)"></div>
<div class="b" style="left:1342.00px;top:990.98px;width:8.00px;height:87.80px;background:#f5a00b;border-radius:8px 0 0 8px;clip-path:inset(0 4.4px 0 0)"></div>
<div class="b" style="left:1360.20px;top:972.98px;width:116.80px;height:22.00px;background:#e2f7fb;border-radius:11px;box-shadow:0 1px 2px rgba(0,0,0,0.08)"></div>
<svg class="b" style="left:1371.50px;top:979.98px;" width="11" height="8" viewBox="0 0 11 8"><path d="M0.8 4 Q5.5 -1 10.2 4 Q5.5 9 0.8 4Z" fill="none" stroke="#12b4cf" stroke-width="1.3"/><circle cx="5.5" cy="4" r="1.6" fill="#12b4cf"/></svg>
<div class="t" style="left:1386.50px;top:978.47px;font-size:11px;color:#12b4cf;letter-spacing:0.000px;transform:scaleX(1.2461);transform-origin:0 0;">Veröffentlicht</div>
<div class="t" style="left:1360.50px;top:1002.92px;font-size:13.3px;color:#1f1f1f;letter-spacing:0.000px;transform:scaleX(1.1502);transform-origin:0 0;-webkit-text-stroke:0.15px #1f1f1f;">Deutsch (Grundkurs) - Freie Modulwahl</div>
<div class="t" style="left:1638.00px;top:1002.92px;font-size:13.3px;color:#a4a4aa;letter-spacing:0.000px;transform:scaleX(0.9650);transform-origin:0 0;">DEF-1022</div>
<div class="t" style="left:1910.00px;top:1002.75px;font-size:11.5px;color:#4f7df7;letter-spacing:0.000px;transform:scaleX(1.1395);transform-origin:0 0;">Aktionen</div>
<svg class="b" style="left:1965.00px;top:1003.48px;" width="14" height="9.8" viewBox="0 0 14 9.8"><path d="M2 2 L7.0 7.8 L12 2" fill="none" stroke="#4f7df7" stroke-width="2" stroke-linecap="round" stroke-linejoin="round"/></svg>
<div class="t" style="left:1360.50px;top:1032.54px;font-size:12.8px;color:#a4a4aa;letter-spacing:0.000px;transform:scaleX(1.1574);transform-origin:0 0;">Status</div>
<svg class="b" style="left:1360.20px;top:1051.78px;" width="15.5" height="15.5" viewBox="0 0 15.5 15.5"><circle cx="7.75" cy="7.75" r="7.75" fill="#1cb482"/><path d="M4.1850000000000005 8.06 L6.82 10.540000000000001 L11.47 5.58" fill="none" stroke="#fff" stroke-width="2.3249999999999997" stroke-linecap="round" stroke-linejoin="round"/></svg>
<div class="t" style="left:1382.90px;top:1052.44px;font-size:12.8px;color:#262626;letter-spacing:0.000px;transform:scaleX(1.1176);transform-origin:0 0;">Aktiv</div>
<div class="t" style="left:1441.60px;top:1032.54px;font-size:12.8px;color:#a4a4aa;letter-spacing:0.000px;transform:scaleX(1.1922);transform-origin:0 0;">Nummer</div>
<div class="t" style="left:1441.60px;top:1052.44px;font-size:12.8px;color:#262626;letter-spacing:0.000px;transform:scaleX(0.9646);transform-origin:0 0;">160817</div>
<div class="t" style="left:1527.70px;top:1032.54px;font-size:12.8px;color:#a4a4aa;letter-spacing:0.000px;transform:scaleX(1.2047);transform-origin:0 0;">Gebucht am</div>
<div class="t" style="left:1527.70px;top:1052.44px;font-size:12.8px;color:#262626;letter-spacing:0.000px;transform:scaleX(1.1008);transform-origin:0 0;">29.08.2022 08:35</div>
<div class="t" style="left:1665.00px;top:1032.54px;font-size:12.8px;color:#a4a4aa;letter-spacing:0.000px;transform:scaleX(1.2057);transform-origin:0 0;">Total</div>
<div class="t" style="left:1665.00px;top:1052.44px;font-size:12.8px;color:#262626;letter-spacing:0.000px;transform:scaleX(1.0273);transform-origin:0 0;">CHF 180.00</div>
<div class="b" style="left:1342.00px;top:1114.64px;width:649.00px;height:87.80px;background:#fff;border:1px solid #f0f0f0;border-radius:8px;box-shadow:0 1.5px 2px rgba(0,0,0,0.07)"></div>
<div class="b" style="left:1342.00px;top:1114.64px;width:8.00px;height:87.80px;background:#f5a00b;border-radius:8px 0 0 8px;clip-path:inset(0 4.4px 0 0)"></div>
<div class="b" style="left:1360.20px;top:1096.64px;width:110.00px;height:22.00px;background:#dcf7ec;border-radius:11px;box-shadow:0 1px 2px rgba(0,0,0,0.08)"></div>
<svg class="b" style="left:1372.00px;top:1103.14px;" width="9.5" height="9.5" viewBox="0 0 9.5 9.5"><circle cx="4.75" cy="4.75" r="4.75" fill="#15a06a"/><path d="M2.5650000000000004 4.94 L4.18 6.460000000000001 L7.03 3.42" fill="none" stroke="#fff" stroke-width="1.425" stroke-linecap="round" stroke-linejoin="round"/></svg>
<div class="t" style="left:1386.50px;top:1102.13px;font-size:11px;color:#15a06a;letter-spacing:0.000px;transform:scaleX(1.0685);transform-origin:0 0;">Freigegeben</div>
<div class="t" style="left:1360.50px;top:1126.58px;font-size:13.3px;color:#1f1f1f;letter-spacing:0.000px;transform:scaleX(1.1719);transform-origin:0 0;-webkit-text-stroke:0.15px #1f1f1f;">Deutsch (Grundkurs) - (Mustpay Sammel Count)</div>
<div class="t" style="left:1705.60px;top:1126.58px;font-size:13.3px;color:#a4a4aa;letter-spacing:0.000px;transform:scaleX(1.0061);transform-origin:0 0;">DEW-1022</div>
<div class="t" style="left:1910.00px;top:1126.41px;font-size:11.5px;color:#4f7df7;letter-spacing:0.000px;transform:scaleX(1.1395);transform-origin:0 0;">Aktionen</div>
<svg class="b" style="left:1965.00px;top:1127.14px;" width="14" height="9.8" viewBox="0 0 14 9.8"><path d="M2 2 L7.0 7.8 L12 2" fill="none" stroke="#4f7df7" stroke-width="2" stroke-linecap="round" stroke-linejoin="round"/></svg>
<div class="t" style="left:1360.50px;top:1156.20px;font-size:12.8px;color:#a4a4aa;letter-spacing:0.000px;transform:scaleX(1.1574);transform-origin:0 0;">Status</div>
<svg class="b" style="left:1360.20px;top:1175.44px;" width="15.5" height="15.5" viewBox="0 0 15.5 15.5"><circle cx="7.75" cy="7.75" r="7.75" fill="#1cb482"/><path d="M4.1850000000000005 8.06 L6.82 10.540000000000001 L11.47 5.58" fill="none" stroke="#fff" stroke-width="2.3249999999999997" stroke-linecap="round" stroke-linejoin="round"/></svg>
<div class="t" style="left:1382.90px;top:1176.10px;font-size:12.8px;color:#262626;letter-spacing:0.000px;transform:scaleX(1.1176);transform-origin:0 0;">Aktiv</div>
<div class="t" style="left:1441.60px;top:1156.20px;font-size:12.8px;color:#a4a4aa;letter-spacing:0.000px;transform:scaleX(1.1922);transform-origin:0 0;">Nummer</div>
<div class="t" style="left:1441.60px;top:1176.10px;font-size:12.8px;color:#262626;letter-spacing:0.000px;transform:scaleX(1.0816);transform-origin:0 0;">160804</div>
<div class="t" style="left:1527.70px;top:1156.20px;font-size:12.8px;color:#a4a4aa;letter-spacing:0.000px;transform:scaleX(1.2047);transform-origin:0 0;">Gebucht am</div>
<div class="t" style="left:1527.70px;top:1176.10px;font-size:12.8px;color:#262626;letter-spacing:0.000px;transform:scaleX(1.1079);transform-origin:0 0;">25.08.2022 08:58</div>
<div class="t" style="left:1666.00px;top:1156.20px;font-size:12.8px;color:#a4a4aa;letter-spacing:0.000px;transform:scaleX(1.2057);transform-origin:0 0;">Total</div>
<div class="t" style="left:1666.00px;top:1176.10px;font-size:12.8px;color:#262626;letter-spacing:0.000px;transform:scaleX(1.0479);transform-origin:0 0;">CHF 5.00</div>
<div class="b" style="left:1342.00px;top:1238.30px;width:649.00px;height:87.80px;background:#fff;border:1px solid #f0f0f0;border-radius:8px;box-shadow:0 1.5px 2px rgba(0,0,0,0.07)"></div>
<div class="b" style="left:1342.00px;top:1238.30px;width:8.00px;height:87.80px;background:#f5a00b;border-radius:8px 0 0 8px;clip-path:inset(0 4.4px 0 0)"></div>
<div class="b" style="left:1360.20px;top:1220.30px;width:110.00px;height:22.00px;background:#dcf7ec;border-radius:11px;box-shadow:0 1px 2px rgba(0,0,0,0.08)"></div>
<svg class="b" style="left:1372.00px;top:1226.80px;" width="9.5" height="9.5" viewBox="0 0 9.5 9.5"><circle cx="4.75" cy="4.75" r="4.75" fill="#15a06a"/><path d="M2.5650000000000004 4.94 L4.18 6.460000000000001 L7.03 3.42" fill="none" stroke="#fff" stroke-width="1.425" stroke-linecap="round" stroke-linejoin="round"/></svg>
<div class="t" style="left:1386.50px;top:1225.79px;font-size:11px;color:#15a06a;letter-spacing:0.000px;transform:scaleX(1.0685);transform-origin:0 0;">Freigegeben</div>
<div class="t" style="left:1360.50px;top:1250.24px;font-size:13.3px;color:#1f1f1f;letter-spacing:0.000px;transform:scaleX(1.1719);transform-origin:0 0;-webkit-text-stroke:0.15px #1f1f1f;">Deutsch (Grundkurs) - (Mustpay Sammel Count)</div>
<div class="t" style="left:1705.60px;top:1250.24px;font-size:13.3px;color:#a4a4aa;letter-spacing:0.000px;transform:scaleX(1.0061);transform-origin:0 0;">DEW-1022</div>
<div class="t" style="left:1910.00px;top:1250.07px;font-size:11.5px;color:#4f7df7;letter-spacing:0.000px;transform:scaleX(1.1395);transform-origin:0 0;">Aktionen</div>
<svg class="b" style="left:1965.00px;top:1250.80px;" width="14" height="9.8" viewBox="0 0 14 9.8"><path d="M2 2 L7.0 7.8 L12 2" fill="none" stroke="#4f7df7" stroke-width="2" stroke-linecap="round" stroke-linejoin="round"/></svg>
<div class="t" style="left:1360.50px;top:1279.86px;font-size:12.8px;color:#a4a4aa;letter-spacing:0.000px;transform:scaleX(1.1574);transform-origin:0 0;">Status</div>
<svg class="b" style="left:1360.50px;top:1298.30px;" width="14" height="16" viewBox="0 0 14 16"><circle cx="7" cy="9.5" r="6.3" fill="#f5a00b"/><rect x="5" y="0.5" width="4" height="2" fill="#f5a00b"/><path d="M7 6 V9.8" stroke="#fff" stroke-width="1.6" stroke-linecap="round"/></svg>
<div class="t" style="left:1380.50px;top:1299.76px;font-size:12.8px;color:#262626;letter-spacing:0.000px;transform:scaleX(1.1963);transform-origin:0 0;">Warteliste</div>
<div class="t" style="left:1475.40px;top:1279.86px;font-size:12.8px;color:#a4a4aa;letter-spacing:0.000px;transform:scaleX(1.1922);transform-origin:0 0;">Nummer</div>
<div class="t" style="left:1475.40px;top:1299.76px;font-size:12.8px;color:#262626;letter-spacing:0.000px;transform:scaleX(1.0676);transform-origin:0 0;">160803</div>
<div class="t" style="left:1561.50px;top:1279.86px;font-size:12.8px;color:#a4a4aa;letter-spacing:0.000px;transform:scaleX(1.2047);transform-origin:0 0;">Gebucht am</div>
<div class="t" style="left:1561.50px;top:1299.76px;font-size:12.8px;color:#262626;letter-spacing:0.000px;transform:scaleX(1.1079);transform-origin:0 0;">25.08.2022 08:55</div>
<div class="t" style="left:1699.90px;top:1279.86px;font-size:12.8px;color:#a4a4aa;letter-spacing:0.000px;transform:scaleX(1.2057);transform-origin:0 0;">Total</div>
<div class="t" style="left:1699.90px;top:1299.76px;font-size:12.8px;color:#262626;letter-spacing:0.000px;transform:scaleX(1.0479);transform-origin:0 0;">CHF 5.00</div>
<div class="b" style="left:2033.60px;top:286.00px;width:716.40px;height:648.50px;background:#fff;border:1px solid #eeeeee;border-radius:9px;box-shadow:0 1.5px 2.5px rgba(0,0,0,0.06)"></div>
<div class="t" style="left:2056.40px;top:306.08px;font-size:14.2px;color:#1f1f1f;letter-spacing:0.000px;transform:scaleX(1.1734);transform-origin:0 0;-webkit-text-stroke:0.15px #1f1f1f;">Rechnungen</div>
<div class="b" style="left:2056.00px;top:339.00px;width:671.00px;height:1.00px;background:#e4e4e4"></div>
<div class="b" style="left:2058.50px;top:367.00px;width:666.30px;height:87.80px;background:#fff;border:1px solid #f0f0f0;border-radius:8px;box-shadow:0 1.5px 2px rgba(0,0,0,0.07)"></div>
<div class="b" style="left:2058.50px;top:367.00px;width:8.00px;height:87.80px;background:#1bb47f;border-radius:8px 0 0 8px;clip-path:inset(0 4.4px 0 0)"></div>
<div class="t" style="left:2076.00px;top:379.84px;font-size:13.3px;color:#1f1f1f;letter-spacing:0.000px;transform:scaleX(1.0082);transform-origin:0 0;-webkit-text-stroke:0.15px #1f1f1f;">ED603</div>
<div class="t" style="left:2126.70px;top:379.84px;font-size:13.3px;color:#a4a4aa;letter-spacing:0.000px;transform:scaleX(1.0773);transform-origin:0 0;">160817 Deutsch (Grundkurs) - Freie Modulwahl DEF-1022</div>
<div class="t" style="left:2076.00px;top:409.46px;font-size:12.8px;color:#a4a4aa;letter-spacing:0.000px;transform:scaleX(1.1574);transform-origin:0 0;">Status</div>
<div class="t" style="left:2162.20px;top:409.46px;font-size:12.8px;color:#a4a4aa;letter-spacing:0.000px;transform:scaleX(1.1607);transform-origin:0 0;">Erfasst am</div>
<div class="t" style="left:2291.30px;top:409.46px;font-size:12.8px;color:#a4a4aa;letter-spacing:0.000px;transform:scaleX(1.1844);transform-origin:0 0;">Fällig am</div>
<div class="t" style="left:2421.00px;top:409.46px;font-size:12.8px;color:#a4a4aa;letter-spacing:0.000px;transform:scaleX(1.2205);transform-origin:0 0;">Total</div>
<svg class="b" style="left:2076.00px;top:429.50px;" width="15.5" height="15.5" viewBox="0 0 15.5 15.5"><circle cx="7.75" cy="7.75" r="7.75" fill="#262a2e"/><rect x="6.6" y="3.2" width="2.3" height="6" rx="1" fill="#fff"/><circle cx="7.75" cy="11.8" r="1.25" fill="#fff"/></svg>
<div class="t" style="left:2098.50px;top:430.46px;font-size:12.8px;color:#262626;letter-spacing:0.000px;transform:scaleX(1.1585);transform-origin:0 0;">Offen</div>
<div class="t" style="left:2162.20px;top:430.46px;font-size:12.8px;color:#262626;letter-spacing:0.000px;transform:scaleX(1.0185);transform-origin:0 0;">25.01.2023 10:30</div>
<div class="t" style="left:2291.30px;top:430.46px;font-size:12.8px;color:#262626;letter-spacing:0.000px;transform:scaleX(1.0185);transform-origin:0 0;">25.01.2023 10:30</div>
<div class="t" style="left:2421.00px;top:430.46px;font-size:12.8px;color:#262626;letter-spacing:0.000px;transform:scaleX(1.0143);transform-origin:0 0;">CHF 180.00</div>
<div class="b" style="left:2058.50px;top:463.95px;width:666.30px;height:87.80px;background:#fff;border:1px solid #f0f0f0;border-radius:8px;box-shadow:0 1.5px 2px rgba(0,0,0,0.07)"></div>
<div class="b" style="left:2058.50px;top:463.95px;width:8.00px;height:87.80px;background:#1bb47f;border-radius:8px 0 0 8px;clip-path:inset(0 4.4px 0 0)"></div>
<div class="t" style="left:2076.00px;top:476.79px;font-size:13.3px;color:#1f1f1f;letter-spacing:0.000px;transform:scaleX(1.0082);transform-origin:0 0;-webkit-text-stroke:0.15px #1f1f1f;">ED602</div>
<div class="t" style="left:2126.70px;top:476.79px;font-size:13.3px;color:#a4a4aa;letter-spacing:0.000px;transform:scaleX(1.0969);transform-origin:0 0;">160864 Deutsch (Grundkurs) - (Ticketing) DET-1122</div>
<div class="t" style="left:2076.00px;top:506.41px;font-size:12.8px;color:#a4a4aa;letter-spacing:0.000px;transform:scaleX(1.1574);transform-origin:0 0;">Status</div>
<div class="t" style="left:2162.20px;top:506.41px;font-size:12.8px;color:#a4a4aa;letter-spacing:0.000px;transform:scaleX(1.1607);transform-origin:0 0;">Erfasst am</div>
<div class="t" style="left:2291.30px;top:506.41px;font-size:12.8px;color:#a4a4aa;letter-spacing:0.000px;transform:scaleX(1.1844);transform-origin:0 0;">Fällig am</div>
<div class="t" style="left:2421.00px;top:506.41px;font-size:12.8px;color:#a4a4aa;letter-spacing:0.000px;transform:scaleX(1.2205);transform-origin:0 0;">Total</div>
<svg class="b" style="left:2076.00px;top:526.45px;" width="15.5" height="15.5" viewBox="0 0 15.5 15.5"><circle cx="7.75" cy="7.75" r="7.75" fill="#262a2e"/><rect x="6.6" y="3.2" width="2.3" height="6" rx="1" fill="#fff"/><circle cx="7.75" cy="11.8" r="1.25" fill="#fff"/></svg>
<div class="t" style="left:2098.50px;top:527.41px;font-size:12.8px;color:#262626;letter-spacing:0.000px;transform:scaleX(1.1585);transform-origin:0 0;">Offen</div>
<div class="t" style="left:2162.20px;top:527.41px;font-size:12.8px;color:#262626;letter-spacing:0.000px;transform:scaleX(1.0185);transform-origin:0 0;">25.01.2023 10:30</div>
<div class="t" style="left:2291.30px;top:527.41px;font-size:12.8px;color:#262626;letter-spacing:0.000px;transform:scaleX(1.0185);transform-origin:0 0;">25.01.2023 10:30</div>
<div class="t" style="left:2421.00px;top:527.41px;font-size:12.8px;color:#262626;letter-spacing:0.000px;transform:scaleX(1.0017);transform-origin:0 0;">CHF 10.00</div>
<div class="b" style="left:2058.50px;top:560.90px;width:666.30px;height:87.80px;background:#fff;border:1px solid #f0f0f0;border-radius:8px;box-shadow:0 1.5px 2px rgba(0,0,0,0.07)"></div>
<div class="b" style="left:2058.50px;top:560.90px;width:8.00px;height:87.80px;background:#1bb47f;border-radius:8px 0 0 8px;clip-path:inset(0 4.4px 0 0)"></div>
<div class="t" style="left:2076.00px;top:573.74px;font-size:13.3px;color:#1f1f1f;letter-spacing:0.000px;transform:scaleX(0.9344);transform-origin:0 0;-webkit-text-stroke:0.15px #1f1f1f;">ED601</div>
<div class="t" style="left:2123.70px;top:573.74px;font-size:13.3px;color:#a4a4aa;letter-spacing:0.000px;transform:scaleX(1.1159);transform-origin:0 0;">160882 Deutsch (Grundkurs) - (Mustpay Sammel Count) DEW-1022</div>
<div class="t" style="left:2076.00px;top:603.36px;font-size:12.8px;color:#a4a4aa;letter-spacing:0.000px;transform:scaleX(1.1574);transform-origin:0 0;">Status</div>
<div class="t" style="left:2162.20px;top:603.36px;font-size:12.8px;color:#a4a4aa;letter-spacing:0.000px;transform:scaleX(1.1607);transform-origin:0 0;">Erfasst am</div>
<div class="t" style="left:2291.30px;top:603.36px;font-size:12.8px;color:#a4a4aa;letter-spacing:0.000px;transform:scaleX(1.1844);transform-origin:0 0;">Fällig am</div>
<div class="t" style="left:2421.00px;top:603.36px;font-size:12.8px;color:#a4a4aa;letter-spacing:0.000px;transform:scaleX(1.2205);transform-origin:0 0;">Total</div>
<svg class="b" style="left:2076.00px;top:623.40px;" width="15.5" height="15.5" viewBox="0 0 15.5 15.5"><circle cx="7.75" cy="7.75" r="7.75" fill="#262a2e"/><rect x="6.6" y="3.2" width="2.3" height="6" rx="1" fill="#fff"/><circle cx="7.75" cy="11.8" r="1.25" fill="#fff"/></svg>
<div class="t" style="left:2098.50px;top:624.36px;font-size:12.8px;color:#262626;letter-spacing:0.000px;transform:scaleX(1.1585);transform-origin:0 0;">Offen</div>
<div class="t" style="left:2162.20px;top:624.36px;font-size:12.8px;color:#262626;letter-spacing:0.000px;transform:scaleX(1.0185);transform-origin:0 0;">25.01.2023 10:30</div>
<div class="t" style="left:2291.30px;top:624.36px;font-size:12.8px;color:#262626;letter-spacing:0.000px;transform:scaleX(1.0185);transform-origin:0 0;">25.01.2023 10:30</div>
<div class="t" style="left:2421.00px;top:624.36px;font-size:12.8px;color:#262626;letter-spacing:0.000px;transform:scaleX(1.0589);transform-origin:0 0;">CHF 5.00</div>
<div class="b" style="left:2033.60px;top:953.00px;width:716.40px;height:649.50px;background:#fff;border:1px solid #eeeeee;border-radius:9px;box-shadow:0 1.5px 2.5px rgba(0,0,0,0.06)"></div>
<div class="b" style="left:2744.50px;top:953.50px;width:5.50px;height:615.00px;background:#c8c8c8;border-radius:3px"></div>
<div class="t" style="left:2057.10px;top:972.58px;font-size:14.2px;color:#1f1f1f;letter-spacing:0.000px;transform:scaleX(1.1215);transform-origin:0 0;-webkit-text-stroke:0.15px #1f1f1f;">Notizen</div>
<div class="b" style="left:2056.00px;top:1007.00px;width:666.00px;height:1.00px;background:#e4e4e4"></div>
<div class="b" style="left:2058.50px;top:1035.20px;width:661.50px;height:44.40px;background:#fff;border:1px solid #f0f0f0;border-radius:8px;box-shadow:0 1.5px 2px rgba(0,0,0,0.07)"></div>
<div class="b" style="left:2058.50px;top:1035.20px;width:8.00px;height:44.40px;background:#ecb000;border-radius:8px 0 0 8px;clip-path:inset(0 4.4px 0 0)"></div>
<div class="t" style="left:2076.00px;top:1053.94px;font-size:13.3px;color:#1f1f1f;letter-spacing:0.000px;transform:scaleX(1.1651);transform-origin:0 0;-webkit-text-stroke:0.15px #1f1f1f;">Teilnehmer wurde zum Angebot hinzugefügt</div>
<div class="t" style="left:2630.20px;top:1053.07px;font-size:11.5px;color:#a4a4aa;letter-spacing:0.000px;transform:scaleX(1.1368);transform-origin:0 0;">vor 5 Monate</div>
<div class="b" style="left:2058.50px;top:1089.20px;width:661.50px;height:44.40px;background:#fff;border:1px solid #f0f0f0;border-radius:8px;box-shadow:0 1.5px 2px rgba(0,0,0,0.07)"></div>
<div class="b" style="left:2058.50px;top:1089.20px;width:8.00px;height:44.40px;background:#ecb000;border-radius:8px 0 0 8px;clip-path:inset(0 4.4px 0 0)"></div>
<div class="t" style="left:2076.00px;top:1107.94px;font-size:13.3px;color:#1f1f1f;letter-spacing:0.000px;transform:scaleX(1.1651);transform-origin:0 0;-webkit-text-stroke:0.15px #1f1f1f;">Teilnehmer wurde zum Angebot hinzugefügt</div>
<div class="t" style="left:2630.20px;top:1107.07px;font-size:11.5px;color:#a4a4aa;letter-spacing:0.000px;transform:scaleX(1.1368);transform-origin:0 0;">vor 5 Monate</div>
<div class="b" style="left:2058.50px;top:1143.30px;width:661.50px;height:44.40px;background:#fff;border:1px solid #f0f0f0;border-radius:8px;box-shadow:0 1.5px 2px rgba(0,0,0,0.07)"></div>
<div class="b" style="left:2058.50px;top:1143.30px;width:8.00px;height:44.40px;background:#ecb000;border-radius:8px 0 0 8px;clip-path:inset(0 4.4px 0 0)"></div>
<div class="t" style="left:2076.00px;top:1162.04px;font-size:13.3px;color:#1f1f1f;letter-spacing:0.000px;transform:scaleX(1.1651);transform-origin:0 0;-webkit-text-stroke:0.15px #1f1f1f;">Teilnehmer wurde zum Angebot hinzugefügt</div>
<div class="t" style="left:2630.80px;top:1161.17px;font-size:11.5px;color:#a4a4aa;letter-spacing:0.000px;transform:scaleX(1.1278);transform-origin:0 0;">vor 3 Monate</div>
<div class="b" style="left:2058.50px;top:1197.40px;width:661.50px;height:58.60px;background:#fff;border:1px solid #f0f0f0;border-radius:8px;box-shadow:0 1.5px 2px rgba(0,0,0,0.07)"></div>
<div class="b" style="left:2058.50px;top:1197.40px;width:8.00px;height:58.60px;background:#ecb000;border-radius:8px 0 0 8px;clip-path:inset(0 4.4px 0 0)"></div>
<div class="t" style="left:2076.00px;top:1215.34px;font-size:13.3px;color:#1f1f1f;letter-spacing:0.000px;transform:scaleX(1.1605);transform-origin:0 0;-webkit-text-stroke:0.15px #1f1f1f;">Besuchsbestätigungs-Mail wurde nicht automatisch versendet, da für diesen Teil...</div>
<div class="t" style="left:2654.80px;top:1214.67px;font-size:11.5px;color:#a4a4aa;letter-spacing:0.000px;transform:scaleX(1.1154);transform-origin:0 0;">vor ein</div>
<div class="t" style="left:2654.80px;top:1232.67px;font-size:11.5px;color:#a4a4aa;letter-spacing:0.000px;transform:scaleX(1.1576);transform-origin:0 0;">Monat</div>
<div class="b" style="left:2058.50px;top:1264.50px;width:661.50px;height:44.40px;background:#fff;border:1px solid #f0f0f0;border-radius:8px;box-shadow:0 1.5px 2px rgba(0,0,0,0.07)"></div>
<div class="b" style="left:2058.50px;top:1264.50px;width:8.00px;height:44.40px;background:#ecb000;border-radius:8px 0 0 8px;clip-path:inset(0 4.4px 0 0)"></div>
<div class="t" style="left:2076.00px;top:1283.24px;font-size:13.3px;color:#1f1f1f;letter-spacing:0.000px;transform:scaleX(1.1651);transform-origin:0 0;-webkit-text-stroke:0.15px #1f1f1f;">Teilnehmer wurde zum Angebot hinzugefügt</div>
<div class="t" style="left:2630.20px;top:1282.37px;font-size:11.5px;color:#a4a4aa;letter-spacing:0.000px;transform:scaleX(1.1368);transform-origin:0 0;">vor 5 Monate</div>
<div class="b" style="left:2058.50px;top:1319.20px;width:661.50px;height:44.40px;background:#fff;border:1px solid #f0f0f0;border-radius:8px;box-shadow:0 1.5px 2px rgba(0,0,0,0.07)"></div>
<div class="b" style="left:2058.50px;top:1319.20px;width:8.00px;height:44.40px;background:#ecb000;border-radius:8px 0 0 8px;clip-path:inset(0 4.4px 0 0)"></div>
<div class="t" style="left:2076.00px;top:1337.94px;font-size:13.3px;color:#1f1f1f;letter-spacing:0.000px;transform:scaleX(1.1651);transform-origin:0 0;-webkit-text-stroke:0.15px #1f1f1f;">Teilnehmer wurde zum Angebot hinzugefügt</div>
<div class="t" style="left:2630.80px;top:1337.07px;font-size:11.5px;color:#a4a4aa;letter-spacing:0.000px;transform:scaleX(1.1278);transform-origin:0 0;">vor 3 Monate</div>
<div class="b" style="left:2058.50px;top:1373.20px;width:661.50px;height:44.40px;background:#fff;border:1px solid #f0f0f0;border-radius:8px;box-shadow:0 1.5px 2px rgba(0,0,0,0.07)"></div>
<div class="b" style="left:2058.50px;top:1373.20px;width:8.00px;height:44.40px;background:#ecb000;border-radius:8px 0 0 8px;clip-path:inset(0 4.4px 0 0)"></div>
<div class="t" style="left:2076.00px;top:1391.94px;font-size:13.3px;color:#1f1f1f;letter-spacing:0.000px;transform:scaleX(1.1481);transform-origin:0 0;-webkit-text-stroke:0.15px #1f1f1f;">MustPay Zahlungserinnerung wurde versendet</div>
<div class="t" style="left:2630.20px;top:1391.07px;font-size:11.5px;color:#a4a4aa;letter-spacing:0.000px;transform:scaleX(1.1368);transform-origin:0 0;">vor 5 Monate</div>
<div class="b" style="left:2058.50px;top:1427.30px;width:661.50px;height:104.50px;background:#fff;border:1px solid #f0f0f0;border-radius:8px;box-shadow:0 1.5px 2px rgba(0,0,0,0.07)"></div>
<div class="b" style="left:2058.50px;top:1427.30px;width:8.00px;height:104.50px;background:#ecb000;border-radius:8px 0 0 8px;clip-path:inset(0 4.4px 0 0)"></div>
<div class="t" style="left:2076.00px;top:1446.14px;font-size:13.3px;color:#1f1f1f;letter-spacing:0.000px;transform:scaleX(1.1589);transform-origin:0 0;-webkit-text-stroke:0.15px #1f1f1f;">MustPay Countdown abgelaufen</div>
<div class="t" style="left:2630.20px;top:1445.37px;font-size:11.5px;color:#a4a4aa;letter-spacing:0.000px;transform:scaleX(1.1368);transform-origin:0 0;">vor 5 Monate</div>
<div class="t" style="left:2076.00px;top:1465.64px;font-size:13.3px;color:#a4a4aa;letter-spacing:0.000px;transform:scaleX(1.1054);transform-origin:0 0;">Leider wurde die Buchung nicht bis am 25.08.2022 09:10 bezahlt. Der MustPay Status wurde</div>
<div class="t" style="left:2076.00px;top:1486.64px;font-size:13.3px;color:#a4a4aa;letter-spacing:0.000px;transform:scaleX(1.1611);transform-origin:0 0;">entfernt und kann auch bei erfolgreicher Zahlung nicht mehr automatisch hinzugefügt</div>
<div class="t" style="left:2076.00px;top:1506.14px;font-size:13.3px;color:#a4a4aa;letter-spacing:0.000px;transform:scaleX(1.1222);transform-origin:0 0;">werden.</div>
<div class="b" style="left:2058.50px;top:1541.50px;width:661.50px;height:44.40px;background:#fff;border:1px solid #f0f0f0;border-radius:8px;box-shadow:0 1.5px 2px rgba(0,0,0,0.07)"></div>
<div class="b" style="left:2058.50px;top:1541.50px;width:8.00px;height:44.40px;background:#ecb000;border-radius:8px 0 0 8px;clip-path:inset(0 4.4px 0 0)"></div>
<div class="t" style="left:2076.00px;top:1560.24px;font-size:13.3px;color:#1f1f1f;letter-spacing:0.000px;transform:scaleX(1.1651);transform-origin:0 0;-webkit-text-stroke:0.15px #1f1f1f;">Teilnehmer wurde zum Angebot hinzugefügt</div>
<div class="t" style="left:2645.20px;top:1559.37px;font-size:11.5px;color:#a4a4aa;letter-spacing:0.000px;transform:scaleX(1.1460);transform-origin:0 0;">vor 8 Tage</div>
<div class="b" style="left:0.00px;top:0.00px;width:2787.00px;height:1.00px;background:#f6e3dc"></div>
<div class="b" style="left:0.00px;top:1.00px;width:2787.00px;height:1.20px;background:#cdb4ac"></div>
<div class="b" style="left:0.00px;top:0.00px;width:1.00px;height:1638.00px;background:#e6e6e6"></div>
<div class="b" style="left:1.00px;top:2.00px;width:2.00px;height:1636.00px;background:#b3b3b3"></div>
<div class="b" style="left:2785.00px;top:2.00px;width:2.00px;height:1636.00px;background:#a8a8a8"></div>
<div class="b" style="left:0.00px;top:1636.50px;width:2787.00px;height:1.50px;background:#a8a8a8"></div>
<svg class="b" style="left:0.00px;top:1626.00px;" width="14" height="12" viewBox="0 0 14 12"><path d="M0 0 H2 V1 Q2 10 12 10 H14 V12 H0Z" fill="#e4e4e4"/><path d="M2 0 V1 Q2 10.6 12 10.6 H14" fill="none" stroke="#a6a6a6" stroke-width="2"/></svg>
<svg class="b" style="left:2773.00px;top:1626.00px;" width="14" height="12" viewBox="0 0 14 12"><path d="M14 0 H12 V1 Q12 10 2 10 H0 V12 H14Z" fill="#e4e4e4"/><path d="M12 0 V1 Q12 10.6 2 10.6 H0" fill="none" stroke="#a6a6a6" stroke-width="2"/></svg>
</body></html>
